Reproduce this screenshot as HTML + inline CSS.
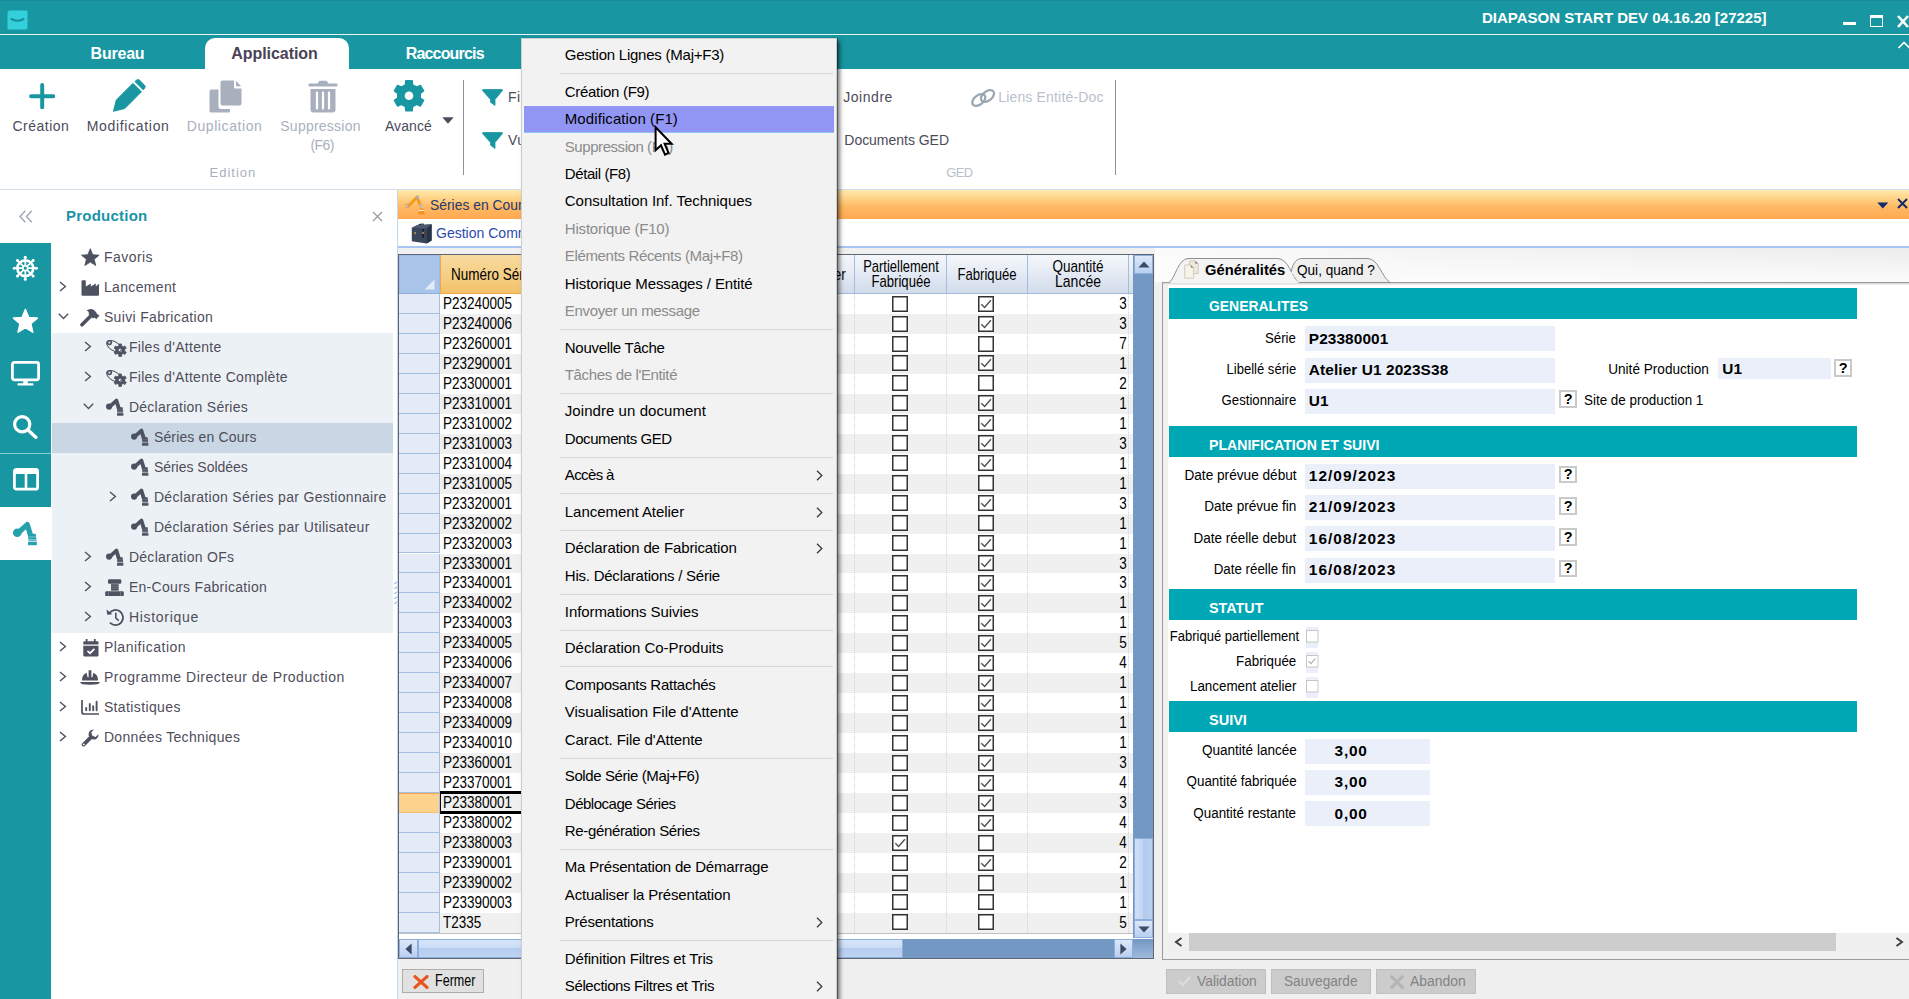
<!DOCTYPE html>
<html lang="fr"><head><meta charset="utf-8"><title>DIAPASON START DEV 04.16.20 [27225]</title>
<style>
html,body{margin:0;padding:0}
body{width:1909px;height:999px;overflow:hidden;position:relative;background:#f0f0f0;font-family:"Liberation Sans",sans-serif;}
.b{position:absolute;box-sizing:border-box;display:block}
.t{position:absolute;white-space:nowrap;display:block}
header,nav,main,aside,menu{display:block;margin:0;padding:0;position:static}
</style></head>
<body>
<header aria-label="Barre de titre et ruban">
<div class="b" style="left:0px;top:0px;width:1909px;height:34px;background:#1897a2;"></div>
<div class="b" style="left:0px;top:0px;width:1909px;height:1px;background:#178c96;"></div>
<div class="b" style="left:0px;top:34px;width:1909px;height:1px;background:#e8f4f5;"></div>
<div class="b" style="left:0px;top:35px;width:1909px;height:34px;background:#1897a2;"></div>
<svg class="b" style="left:7px;top:10px;" width="21" height="20" viewBox="0 0 21 20"><path d="M3 0.5H19.5Q20.5 0.5 20.5 1.5V17Q20.5 19.5 18 19.5H0.5V3Q0.5 0.5 3 0.5Z" fill="#33d0dc"/><path d="M4.5 9Q10.5 12.5 16.5 9" fill="none" stroke="#1a8f9a" stroke-width="2.2" stroke-linecap="round"/></svg>
<span class="t" style="left:1482.00px;top:10.20px;font-size:15px;line-height:15px;color:#fff;font-weight:700;">DIAPASON START DEV 04.16.20 [27225]</span>
<div class="b" style="left:1843px;top:22px;width:13px;height:3px;background:#fff;"></div>
<div class="b" style="left:1870px;top:15px;width:13px;height:12px;border:1.5px solid #fff;border-top-width:3px;box-sizing:border-box;"></div>
<svg class="b" style="left:1896px;top:14px;" width="13" height="15" viewBox="0 0 13 15"><path d="M2 2L12 13M12 2L2 13" stroke="#fff" stroke-width="2.6"/></svg>
<svg class="b" style="left:1897px;top:40px;" width="12" height="10" viewBox="0 0 12 10"><path d="M1.5 8L7 2.5L12.5 8" stroke="#fff" stroke-width="1.6" fill="none"/></svg>
<span class="t" style="left:90.60px;top:45.76px;font-size:16px;line-height:16px;color:#fff;font-weight:700;letter-spacing:-0.225px;">Bureau</span>
<div class="b" style="left:204.7px;top:38px;width:144.2px;height:31px;background:#fff;border-radius:10px 10px 0 0;"></div>
<span class="t" style="left:231.30px;top:45.76px;font-size:16px;line-height:16px;color:#4a4358;font-weight:700;letter-spacing:-0.061px;">Application</span>
<span class="t" style="left:405.70px;top:45.76px;font-size:16px;line-height:16px;color:#fff;font-weight:700;letter-spacing:-0.818px;">Raccourcis</span>
<div class="b" style="left:0px;top:69px;width:1909px;height:120px;background:#fff;"></div>
<div class="b" style="left:0px;top:189px;width:1909px;height:1px;background:#d3e0ea;"></div>
<div class="b" style="left:0px;top:190px;width:398px;height:809px;background:#fff;"></div>
<svg class="b" style="left:28.8px;top:82.9px;" width="26.4" height="26.4" viewBox="0 0 28 28"><path d="M14 2.2V25.8M2.2 14H25.8" stroke="#1897a2" stroke-width="4.2" stroke-linecap="round"/></svg>
<svg class="b" style="left:112px;top:79px;" width="34" height="34" viewBox="0 0 36 36"><path d="M1.5 34.2L4.6 22.2L22.2 4.6L31.2 13.6L13.6 31.2Z" fill="#1897a2" stroke="#1897a2" stroke-width="1" stroke-linejoin="round"/><path d="M24.3 2.7L26 1.2Q27.6 0 29.2 1.3L34.5 6.6Q35.8 8.2 34.5 9.8L33 11.5Z" fill="#1897a2" stroke="#1897a2" stroke-width="1" stroke-linejoin="round"/></svg>
<svg class="b" style="left:209px;top:80px;" width="33" height="33" viewBox="0 0 33 33"><path d="M2.5 9.5H9.5V26.5Q9.5 29 12 29H21V31Q21 32.5 19.5 32.5H2Q0.5 32.5 0.5 31V11.5Q0.5 9.5 2.5 9.5Z" fill="#a9b0bd"/><path d="M13.5 0.5H25V7Q25 8.5 26.5 8.5H32.5V23.5Q32.5 25.5 30.5 25.5H13.5Q11.5 25.5 11.5 23.5V2.5Q11.5 0.5 13.5 0.5Z" fill="#a9b0bd"/><path d="M27 0.8L32.2 6.2H27Z" fill="#a9b0bd"/></svg>
<svg class="b" style="left:308px;top:80px;" width="30" height="33" viewBox="0 0 30 33"><path d="M1.5 3.5H9.5L11.5 0.8H18.5L20.5 3.5H28.5Q29.5 3.5 29.5 4.7V5.8Q29.5 6.5 28.5 6.5H1.5Q0.5 6.5 0.5 5.8V4.7Q0.5 3.5 1.5 3.5Z" fill="#a9b0bd"/><path d="M2.5 9H27.5V29.5Q27.5 32.5 24.5 32.5H5.5Q2.5 32.5 2.5 29.5Z" fill="#a9b0bd"/><path d="M9 12.5V28.5M15 12.5V28.5M21 12.5V28.5" stroke="#fff" stroke-width="2.2" stroke-linecap="round"/></svg>
<svg class="b" style="left:393px;top:79px;" width="32" height="34" viewBox="0 0 34 36"><path d="M13.23 6.10 L13.61 1.76 L20.39 1.76 L20.77 6.10 L25.16 8.63 L29.11 6.79 L32.50 12.66 L28.93 15.16 L28.93 20.24 L32.50 22.74 L29.11 28.61 L25.16 26.77 L20.77 29.30 L20.39 33.64 L13.61 33.64 L13.23 29.30 L8.84 26.77 L4.89 28.61 L1.50 22.74 L5.07 20.24 L5.07 15.16 L1.50 12.66 L4.89 6.79 L8.84 8.63Z M11.60 17.70 a5.4 5.4 0 1 0 10.8 0 a5.4 5.4 0 1 0 -10.8 0Z" fill="#1897a2" fill-rule="evenodd" stroke="#1897a2" stroke-width="1.6" stroke-linejoin="round"/></svg>
<span class="t" style="left:12.50px;top:119.45px;font-size:14px;line-height:14px;color:#4b4b5a;letter-spacing:0.483px;">Création</span>
<span class="t" style="left:86.70px;top:119.45px;font-size:14px;line-height:14px;color:#4b4b5a;letter-spacing:0.682px;">Modification</span>
<span class="t" style="left:186.70px;top:119.45px;font-size:14px;line-height:14px;color:#a9b0bd;letter-spacing:0.594px;">Duplication</span>
<span class="t" style="left:280.30px;top:119.45px;font-size:14px;line-height:14px;color:#a9b0bd;letter-spacing:0.237px;">Suppression</span>
<span class="t" style="left:310.40px;top:137.95px;font-size:14px;line-height:14px;color:#a9b0bd;letter-spacing:-0.587px;">(F6)</span>
<span class="t" style="left:384.90px;top:119.45px;font-size:14px;line-height:14px;color:#4b4b5a;letter-spacing:0.111px;">Avancé</span>
<svg class="b" style="left:442px;top:117px;" width="12" height="7" viewBox="0 0 12 7"><path d="M0.3 0.3H11.7L6 6.7Z" fill="#4b4b5a"/></svg>
<span class="t" style="left:209.60px;top:166.20px;font-size:13px;line-height:13px;color:#a9b0bd;letter-spacing:0.992px;">Edition</span>
<div class="b" style="left:463px;top:80px;width:1px;height:95px;background:#8f919c;"></div>
<svg class="b" style="left:482px;top:88.5px;" width="21" height="18" viewBox="0 0 21 18"><path d="M1.2 0.5H19.8Q21 0.5 20.3 1.7L13 10.5V16.5L8.5 13.2V10.5L0.7 1.7Q0 0.5 1.2 0.5Z" fill="#1897a2" stroke="#1897a2" stroke-width="0.8" stroke-linejoin="round"/></svg>
<svg class="b" style="left:482px;top:131.5px;" width="21" height="18" viewBox="0 0 21 18"><path d="M1.2 0.5H19.8Q21 0.5 20.3 1.7L13 10.5V16.5L8.5 13.2V10.5L0.7 1.7Q0 0.5 1.2 0.5Z" fill="#1897a2" stroke="#1897a2" stroke-width="0.8" stroke-linejoin="round"/></svg>
<span class="t" style="left:508.00px;top:90.45px;font-size:14px;line-height:14px;color:#4b4b5a;letter-spacing:0.4px;">Filtres</span>
<span class="t" style="left:508.00px;top:133.15px;font-size:14px;line-height:14px;color:#4b4b5a;letter-spacing:0.4px;">Vues</span>
<span class="t" style="left:843.20px;top:90.45px;font-size:14px;line-height:14px;color:#4b4b5a;letter-spacing:0.547px;">Joindre</span>
<span class="t" style="left:844.30px;top:133.15px;font-size:14px;line-height:14px;color:#4b4b5a;letter-spacing:-0.028px;">Documents GED</span>
<span class="t" style="left:998.20px;top:90.45px;font-size:14px;line-height:14px;color:#b9c0cb;letter-spacing:0.172px;">Liens Entité-Doc</span>
<svg class="b" style="left:969.5px;top:87.5px;" width="27" height="20" viewBox="0 0 27 20"><g fill="none" stroke="#9aa6b2" stroke-width="2.3"><ellipse cx="8.8" cy="12" rx="7.5" ry="4.6" transform="rotate(-38 8.8 12)"/><ellipse cx="17.5" cy="8" rx="7.5" ry="4.6" transform="rotate(-38 17.5 8)"/></g></svg>
<span class="t" style="left:946.30px;top:166.20px;font-size:13px;line-height:13px;color:#b9c0cb;letter-spacing:-0.685px;">GED</span>
<div class="b" style="left:1114.5px;top:80px;width:1px;height:95px;background:#8f919c;"></div>
</header>
<nav aria-label="Navigation Production">
<svg class="b" style="left:19px;top:210px;" width="14" height="13" viewBox="0 0 14 13"><path d="M6.3 0.8L1 6.5L6.3 12.2M12.8 0.8L7.5 6.5L12.8 12.2" fill="none" stroke="#9ea7b6" stroke-width="1.4"/></svg>
<span class="t" style="left:66.00px;top:208.30px;font-size:15px;line-height:15px;color:#1a94a8;font-weight:700;letter-spacing:0.23px;">Production</span>
<svg class="b" style="left:372px;top:211px;" width="11" height="11" viewBox="0 0 11 11"><path d="M1 1L10 10M10 1L1 10" stroke="#9a9aa4" stroke-width="1.3"/></svg>
<div class="b" style="left:0px;top:242.5px;width:50.5px;height:756.5px;background:#1897a2;"></div>
<div class="b" style="left:0px;top:453px;width:50.5px;height:1px;background:#8fcdd3;"></div>
<div class="b" style="left:0px;top:507px;width:50.5px;height:53px;background:#fff;"></div>
<svg class="b" style="left:0px;top:242px;" width="51" height="60" viewBox="0 242 51 60"><circle cx="25.3" cy="268.2" r="7.9" fill="none" stroke="#fff" stroke-width="2.7"/><circle cx="25.3" cy="268.2" r="2.4" fill="none" stroke="#fff" stroke-width="1.6"/><path d="M28.30 268.20L36.70 268.20" stroke="#fff" stroke-width="1.7" stroke-linecap="round"/><circle cx="36.30" cy="268.20" r="1.5" fill="#fff"/><path d="M27.42 270.32L33.36 276.26" stroke="#fff" stroke-width="1.7" stroke-linecap="round"/><circle cx="33.08" cy="275.98" r="1.5" fill="#fff"/><path d="M25.30 271.20L25.30 279.60" stroke="#fff" stroke-width="1.7" stroke-linecap="round"/><circle cx="25.30" cy="279.20" r="1.5" fill="#fff"/><path d="M23.18 270.32L17.24 276.26" stroke="#fff" stroke-width="1.7" stroke-linecap="round"/><circle cx="17.52" cy="275.98" r="1.5" fill="#fff"/><path d="M22.30 268.20L13.90 268.20" stroke="#fff" stroke-width="1.7" stroke-linecap="round"/><circle cx="14.30" cy="268.20" r="1.5" fill="#fff"/><path d="M23.18 266.08L17.24 260.14" stroke="#fff" stroke-width="1.7" stroke-linecap="round"/><circle cx="17.52" cy="260.42" r="1.5" fill="#fff"/><path d="M25.30 265.20L25.30 256.80" stroke="#fff" stroke-width="1.7" stroke-linecap="round"/><circle cx="25.30" cy="257.20" r="1.5" fill="#fff"/><path d="M27.42 266.08L33.36 260.14" stroke="#fff" stroke-width="1.7" stroke-linecap="round"/><circle cx="33.08" cy="260.42" r="1.5" fill="#fff"/></svg>
<svg class="b" style="left:0px;top:300px;" width="51" height="45" viewBox="0 300 51 45"><path d="M25.40 309.50 L28.69 317.47 L37.29 318.14 L30.73 323.73 L32.75 332.11 L25.40 327.60 L18.05 332.11 L20.07 323.73 L13.51 318.14 L22.11 317.47Z" fill="#fff" stroke="#fff" stroke-width="1.6" stroke-linejoin="round"/></svg>
<svg class="b" style="left:11px;top:361px;" width="29" height="25" viewBox="0 0 29 25"><rect x="1.4" y="1.4" width="26.2" height="17.4" rx="2" fill="none" stroke="#fff" stroke-width="2.8"/><path d="M14.5 19V23" stroke="#fff" stroke-width="4.5"/><path d="M7.5 23.4H21.5" stroke="#fff" stroke-width="2.2" stroke-linecap="round"/></svg>
<svg class="b" style="left:12px;top:414px;" width="26" height="25" viewBox="0 0 26 25"><circle cx="10.2" cy="10.2" r="7.6" fill="none" stroke="#fff" stroke-width="3.2"/><path d="M16 16L23.8 23.3" stroke="#fff" stroke-width="3.4" stroke-linecap="round"/></svg>
<svg class="b" style="left:12.5px;top:468px;" width="26" height="23" viewBox="0 0 26 23"><rect x="1.4" y="1.4" width="23.2" height="19.8" rx="2" fill="none" stroke="#fff" stroke-width="2.8"/><path d="M1.4 4H24.6" stroke="#fff" stroke-width="4"/><path d="M13 4V21" stroke="#fff" stroke-width="2.6"/></svg>
<svg class="b" style="left:12.5px;top:521px;" width="24.660000000000004" height="24.660000000000004" viewBox="0 0 18 18"><circle cx="3.1" cy="8.6" r="3.1" fill="#26a0ab"/><path d="M3.8 8.6L10.4 2.6L12.8 10.4" fill="none" stroke="#26a0ab" stroke-width="3.8" stroke-linejoin="round" stroke-linecap="round"/><path d="M10.8 9.3H16.6L17.2 14.4H11.4Z" fill="#26a0ab"/><path d="M11 15.1H17.4V17.7H11Z" fill="#26a0ab"/><path d="M11.2 11.7H16.9M11.4 13.5H17.1" stroke="#8ed0d6" stroke-width="0.6"/></svg>
<div class="b" style="left:52px;top:332.5px;width:341px;height:300px;background:#ecf1f5;"></div>
<div class="b" style="left:52px;top:422.5px;width:341px;height:30px;background:#c8d7e3;"></div>
<svg class="b" style="left:80.5px;top:248px;" width="19" height="19" viewBox="0 0 19 19"><path d="M9.30 0.70 L11.71 6.68 L18.14 7.13 L13.20 11.27 L14.77 17.52 L9.30 14.10 L3.83 17.52 L5.40 11.27 L0.46 7.13 L6.89 6.68Z" fill="#4d5160" stroke="#4d5160" stroke-width="0.8" stroke-linejoin="round"/></svg>
<span class="t" style="left:103.90px;top:250.35px;font-size:14px;line-height:14px;color:#4f4d5b;letter-spacing:0.467px;">Favoris</span>
<svg class="b" style="left:58.9px;top:280.7px;" width="8" height="11" viewBox="0 0 8 11"><path d="M1 1L6.4 5.5L1 10" fill="none" stroke="#4d5160" stroke-width="1.4"/></svg>
<svg class="b" style="left:80.5px;top:278px;" width="19" height="19" viewBox="0 0 19 19"><path d="M1.5 2.2H4Q4.8 2.2 4.8 3V8.6L9.8 5.5V8.6L14.8 5.5V8.6L18 5.8V16.6Q18 17.8 16.8 17.8H1.6Q0.5 17.8 0.5 16.6V3Q0.5 2.2 1.5 2.2Z" fill="#4d5160"/></svg>
<span class="t" style="left:103.90px;top:280.35px;font-size:14px;line-height:14px;color:#4f4d5b;letter-spacing:0.354px;">Lancement</span>
<svg class="b" style="left:57.8px;top:312.8px;" width="11" height="7" viewBox="0 0 11 7"><path d="M0.8 0.8L5.5 5.4L10.2 0.8" fill="none" stroke="#4d5160" stroke-width="1.4"/></svg>
<svg class="b" style="left:79.5px;top:308px;" width="20" height="19" viewBox="0 0 20 19"><path d="M2 16.8L10.2 8.6" stroke="#4d5160" stroke-width="3.6" stroke-linecap="round"/><path d="M6.5 2.6Q10.5 -0.3 14.2 2.2Q16.6 4 17.2 6.2L19.6 7.2L16.2 11.2L14.6 9.6L13 10.6L8.6 6.2Q9.8 3.6 6.5 2.6Z" fill="#4d5160"/></svg>
<span class="t" style="left:103.90px;top:310.35px;font-size:14px;line-height:14px;color:#4f4d5b;letter-spacing:0.344px;">Suivi Fabrication</span>
<svg class="b" style="left:83.9px;top:340.7px;" width="8" height="11" viewBox="0 0 8 11"><path d="M1 1L6.4 5.5L1 10" fill="none" stroke="#4d5160" stroke-width="1.4"/></svg>
<svg class="b" style="left:106.0px;top:338.5px;" width="21" height="18" viewBox="0 0 21 18"><ellipse cx="8" cy="7.2" rx="8.2" ry="4.4" transform="rotate(32 8 7.2)" fill="none" stroke="#4d5160" stroke-width="0.9"/><circle cx="3.4" cy="3.6" r="2.7" fill="#4d5160"/><rect x="2.5" y="2.7" width="1.8" height="1.8" fill="#ecf1f5"/><path d="M12.78 6.83 L12.87 4.94 L15.53 4.94 L15.62 6.83 L17.28 7.78 L18.96 6.92 L20.29 9.22 L18.70 10.24 L18.70 12.16 L20.29 13.18 L18.96 15.48 L17.28 14.62 L15.62 15.57 L15.53 17.46 L12.87 17.46 L12.78 15.57 L11.12 14.62 L9.44 15.48 L8.11 13.18 L9.70 12.16 L9.70 10.24 L8.11 9.22 L9.44 6.92 L11.12 7.78Z M12.30 11.20 a1.9 1.9 0 1 0 3.8 0 a1.9 1.9 0 1 0 -3.8 0Z" fill="#4d5160" fill-rule="evenodd" stroke="#4d5160" stroke-width="0.7" stroke-linejoin="round"/></svg>
<span class="t" style="left:128.90px;top:340.35px;font-size:14px;line-height:14px;color:#4f4d5b;letter-spacing:0.295px;">Files d'Attente</span>
<svg class="b" style="left:83.9px;top:370.7px;" width="8" height="11" viewBox="0 0 8 11"><path d="M1 1L6.4 5.5L1 10" fill="none" stroke="#4d5160" stroke-width="1.4"/></svg>
<svg class="b" style="left:106.0px;top:368.5px;" width="21" height="18" viewBox="0 0 21 18"><ellipse cx="8" cy="7.2" rx="8.2" ry="4.4" transform="rotate(32 8 7.2)" fill="none" stroke="#4d5160" stroke-width="0.9"/><circle cx="3.4" cy="3.6" r="2.7" fill="#4d5160"/><rect x="2.5" y="2.7" width="1.8" height="1.8" fill="#ecf1f5"/><path d="M12.78 6.83 L12.87 4.94 L15.53 4.94 L15.62 6.83 L17.28 7.78 L18.96 6.92 L20.29 9.22 L18.70 10.24 L18.70 12.16 L20.29 13.18 L18.96 15.48 L17.28 14.62 L15.62 15.57 L15.53 17.46 L12.87 17.46 L12.78 15.57 L11.12 14.62 L9.44 15.48 L8.11 13.18 L9.70 12.16 L9.70 10.24 L8.11 9.22 L9.44 6.92 L11.12 7.78Z M12.30 11.20 a1.9 1.9 0 1 0 3.8 0 a1.9 1.9 0 1 0 -3.8 0Z" fill="#4d5160" fill-rule="evenodd" stroke="#4d5160" stroke-width="0.7" stroke-linejoin="round"/></svg>
<span class="t" style="left:128.90px;top:370.35px;font-size:14px;line-height:14px;color:#4f4d5b;letter-spacing:0.288px;">Files d'Attente Complète</span>
<svg class="b" style="left:82.8px;top:402.8px;" width="11" height="7" viewBox="0 0 11 7"><path d="M0.8 0.8L5.5 5.4L10.2 0.8" fill="none" stroke="#4d5160" stroke-width="1.4"/></svg>
<svg class="b" style="left:106.1px;top:398.3px;" width="18.0" height="18.0" viewBox="0 0 18 18"><circle cx="3.1" cy="8.6" r="3.1" fill="#4d5160"/><path d="M3.8 8.6L10.4 2.6L12.8 10.4" fill="none" stroke="#4d5160" stroke-width="3.8" stroke-linejoin="round" stroke-linecap="round"/><path d="M10.8 9.3H16.6L17.2 14.4H11.4Z" fill="#4d5160"/><path d="M11 15.1H17.4V17.7H11Z" fill="#4d5160"/><path d="M11.2 11.7H16.9M11.4 13.5H17.1" stroke="#787c88" stroke-width="0.6"/></svg>
<span class="t" style="left:128.90px;top:400.35px;font-size:14px;line-height:14px;color:#4f4d5b;letter-spacing:0.266px;">Déclaration Séries</span>
<svg class="b" style="left:131.1px;top:428.3px;" width="18.0" height="18.0" viewBox="0 0 18 18"><circle cx="3.1" cy="8.6" r="3.1" fill="#4d5160"/><path d="M3.8 8.6L10.4 2.6L12.8 10.4" fill="none" stroke="#4d5160" stroke-width="3.8" stroke-linejoin="round" stroke-linecap="round"/><path d="M10.8 9.3H16.6L17.2 14.4H11.4Z" fill="#4d5160"/><path d="M11 15.1H17.4V17.7H11Z" fill="#4d5160"/><path d="M11.2 11.7H16.9M11.4 13.5H17.1" stroke="#787c88" stroke-width="0.6"/></svg>
<span class="t" style="left:153.90px;top:430.35px;font-size:14px;line-height:14px;color:#4f4d5b;letter-spacing:0.159px;">Séries en Cours</span>
<svg class="b" style="left:131.1px;top:458.3px;" width="18.0" height="18.0" viewBox="0 0 18 18"><circle cx="3.1" cy="8.6" r="3.1" fill="#4d5160"/><path d="M3.8 8.6L10.4 2.6L12.8 10.4" fill="none" stroke="#4d5160" stroke-width="3.8" stroke-linejoin="round" stroke-linecap="round"/><path d="M10.8 9.3H16.6L17.2 14.4H11.4Z" fill="#4d5160"/><path d="M11 15.1H17.4V17.7H11Z" fill="#4d5160"/><path d="M11.2 11.7H16.9M11.4 13.5H17.1" stroke="#787c88" stroke-width="0.6"/></svg>
<span class="t" style="left:153.90px;top:460.35px;font-size:14px;line-height:14px;color:#4f4d5b;letter-spacing:-0.02px;">Séries Soldées</span>
<svg class="b" style="left:108.9px;top:490.7px;" width="8" height="11" viewBox="0 0 8 11"><path d="M1 1L6.4 5.5L1 10" fill="none" stroke="#4d5160" stroke-width="1.4"/></svg>
<svg class="b" style="left:131.1px;top:488.3px;" width="18.0" height="18.0" viewBox="0 0 18 18"><circle cx="3.1" cy="8.6" r="3.1" fill="#4d5160"/><path d="M3.8 8.6L10.4 2.6L12.8 10.4" fill="none" stroke="#4d5160" stroke-width="3.8" stroke-linejoin="round" stroke-linecap="round"/><path d="M10.8 9.3H16.6L17.2 14.4H11.4Z" fill="#4d5160"/><path d="M11 15.1H17.4V17.7H11Z" fill="#4d5160"/><path d="M11.2 11.7H16.9M11.4 13.5H17.1" stroke="#787c88" stroke-width="0.6"/></svg>
<span class="t" style="left:153.90px;top:490.35px;font-size:14px;line-height:14px;color:#4f4d5b;letter-spacing:0.312px;">Déclaration Séries par Gestionnaire</span>
<svg class="b" style="left:131.1px;top:518.3px;" width="18.0" height="18.0" viewBox="0 0 18 18"><circle cx="3.1" cy="8.6" r="3.1" fill="#4d5160"/><path d="M3.8 8.6L10.4 2.6L12.8 10.4" fill="none" stroke="#4d5160" stroke-width="3.8" stroke-linejoin="round" stroke-linecap="round"/><path d="M10.8 9.3H16.6L17.2 14.4H11.4Z" fill="#4d5160"/><path d="M11 15.1H17.4V17.7H11Z" fill="#4d5160"/><path d="M11.2 11.7H16.9M11.4 13.5H17.1" stroke="#787c88" stroke-width="0.6"/></svg>
<span class="t" style="left:153.90px;top:520.35px;font-size:14px;line-height:14px;color:#4f4d5b;letter-spacing:0.326px;">Déclaration Séries par Utilisateur</span>
<svg class="b" style="left:83.9px;top:550.7px;" width="8" height="11" viewBox="0 0 8 11"><path d="M1 1L6.4 5.5L1 10" fill="none" stroke="#4d5160" stroke-width="1.4"/></svg>
<svg class="b" style="left:106.1px;top:548.3px;" width="18.0" height="18.0" viewBox="0 0 18 18"><circle cx="3.1" cy="8.6" r="3.1" fill="#4d5160"/><path d="M3.8 8.6L10.4 2.6L12.8 10.4" fill="none" stroke="#4d5160" stroke-width="3.8" stroke-linejoin="round" stroke-linecap="round"/><path d="M10.8 9.3H16.6L17.2 14.4H11.4Z" fill="#4d5160"/><path d="M11 15.1H17.4V17.7H11Z" fill="#4d5160"/><path d="M11.2 11.7H16.9M11.4 13.5H17.1" stroke="#787c88" stroke-width="0.6"/></svg>
<span class="t" style="left:128.90px;top:550.35px;font-size:14px;line-height:14px;color:#4f4d5b;letter-spacing:0.283px;">Déclaration OFs</span>
<svg class="b" style="left:83.9px;top:580.7px;" width="8" height="11" viewBox="0 0 8 11"><path d="M1 1L6.4 5.5L1 10" fill="none" stroke="#4d5160" stroke-width="1.4"/></svg>
<svg class="b" style="left:105.3px;top:579px;" width="19" height="18" viewBox="0 0 19 18"><rect x="3" y="0.2" width="13.3" height="4.6" rx="1.2" fill="#4d5160"/><rect x="6" y="4.8" width="7.6" height="7" fill="#70737f"/><path d="M6 6.2H13.6M6 8.3H13.6M6 10.4H13.6" stroke="#4d5160" stroke-width="1.1"/><rect x="0.2" y="12.3" width="18.6" height="4.8" rx="1.2" fill="#4d5160"/><path d="M3.6 12.3V17.1M15.4 12.3V17.1" stroke="#7a7d88" stroke-width="0.9"/></svg>
<span class="t" style="left:128.90px;top:580.35px;font-size:14px;line-height:14px;color:#4f4d5b;letter-spacing:0.296px;">En-Cours Fabrication</span>
<svg class="b" style="left:83.9px;top:610.7px;" width="8" height="11" viewBox="0 0 8 11"><path d="M1 1L6.4 5.5L1 10" fill="none" stroke="#4d5160" stroke-width="1.4"/></svg>
<svg class="b" style="left:106.0px;top:608px;" width="19" height="19" viewBox="0 0 19 19"><path d="M3.2 5.2A7.6 7.6 0 1 1 4.4 15.2" fill="none" stroke="#4d5160" stroke-width="1.8" stroke-linecap="round"/><path d="M0.6 1.6L1.2 6.8L6.4 6.2Z" fill="#4d5160"/><path d="M9.8 5.2V10L12.2 12.2" fill="none" stroke="#4d5160" stroke-width="1.6" stroke-linecap="round"/></svg>
<span class="t" style="left:128.90px;top:610.35px;font-size:14px;line-height:14px;color:#4f4d5b;letter-spacing:0.708px;">Historique</span>
<svg class="b" style="left:58.9px;top:640.7px;" width="8" height="11" viewBox="0 0 8 11"><path d="M1 1L6.4 5.5L1 10" fill="none" stroke="#4d5160" stroke-width="1.4"/></svg>
<svg class="b" style="left:82.5px;top:638.5px;" width="16" height="18" viewBox="0 0 16 18"><path d="M3.6 0V3M11.8 0V3" stroke="#4d5160" stroke-width="1.8"/><path d="M1.5 2.2H14.3Q15.5 2.2 15.5 3.4V5.6H0.3V3.4Q0.3 2.2 1.5 2.2Z" fill="#4d5160"/><path d="M0.3 6.8H15.5V16.2Q15.5 17.6 14.1 17.6H1.7Q0.3 17.6 0.3 16.2Z" fill="#4d5160"/><path d="M4.4 11.8L7 14.2L11.4 9.8" fill="none" stroke="#fff" stroke-width="1.7"/></svg>
<span class="t" style="left:103.90px;top:640.35px;font-size:14px;line-height:14px;color:#4f4d5b;letter-spacing:0.518px;">Planification</span>
<svg class="b" style="left:58.9px;top:670.7px;" width="8" height="11" viewBox="0 0 8 11"><path d="M1 1L6.4 5.5L1 10" fill="none" stroke="#4d5160" stroke-width="1.4"/></svg>
<svg class="b" style="left:79.7px;top:670px;" width="20" height="16" viewBox="0 0 20 16"><path d="M2 10.4Q2 4.6 6.6 2.8L7.6 7.2H8.6V0.3H11.4V7.2H12.4L13.4 2.8Q18 4.6 18 10.4Z" fill="#4d5160"/><path d="M0.4 12H19.6V12.6Q19.6 14.8 10 14.8Q0.4 14.8 0.4 12.6Z" fill="#4d5160"/></svg>
<span class="t" style="left:103.90px;top:670.35px;font-size:14px;line-height:14px;color:#4f4d5b;letter-spacing:0.51px;">Programme Directeur de Production</span>
<svg class="b" style="left:58.9px;top:700.7px;" width="8" height="11" viewBox="0 0 8 11"><path d="M1 1L6.4 5.5L1 10" fill="none" stroke="#4d5160" stroke-width="1.4"/></svg>
<svg class="b" style="left:81.3px;top:699.8px;" width="18" height="16" viewBox="0 0 18 16"><path d="M1 0.6V12Q1 14 3 14H17.6" fill="none" stroke="#4d5160" stroke-width="1.7" stroke-linecap="round"/><path d="M5.2 8V10.2M8.8 4V10.2M12.2 6.2V10.2M15.6 1.8V10.2" stroke="#4d5160" stroke-width="1.9" stroke-linecap="round"/></svg>
<span class="t" style="left:103.90px;top:700.35px;font-size:14px;line-height:14px;color:#4f4d5b;letter-spacing:0.375px;">Statistiques</span>
<svg class="b" style="left:58.9px;top:730.7px;" width="8" height="11" viewBox="0 0 8 11"><path d="M1 1L6.4 5.5L1 10" fill="none" stroke="#4d5160" stroke-width="1.4"/></svg>
<svg class="b" style="left:81.3px;top:728.6px;" width="18" height="18" viewBox="0 0 18 18"><path d="M2.6 15.6L9.6 8.6" stroke="#4d5160" stroke-width="3.8" stroke-linecap="round"/><path d="M12.8 0.4Q9.4 0.2 8 3Q6.8 5.6 8.6 8.2L10.2 9.8Q12.6 11.2 15.2 10Q17.8 8.4 17.6 5L14.6 8L11.4 6.8L10.2 3.6Z" fill="#4d5160"/><circle cx="2.8" cy="15.4" r="0.9" fill="#fff"/></svg>
<span class="t" style="left:103.90px;top:730.35px;font-size:14px;line-height:14px;color:#4f4d5b;letter-spacing:0.326px;">Données Techniques</span>
<svg class="b" style="left:394px;top:581px;" width="4" height="26" viewBox="0 0 4 26"><path d="M0.5 3L3 0.5M0.5 8L3 5.5M0.5 13L3 10.5M0.5 18L3 15.5M0.5 23L3 20.5" stroke="#5b8fd6" stroke-width="1"/></svg>
</nav>
<main aria-label="Séries en Cours">
<div class="b" style="left:397px;top:190px;width:1px;height:809px;background:#c3d6ee;"></div>
<div class="b" style="left:398px;top:190px;width:1511px;height:28.5px;background:linear-gradient(#ffe9ac 0%,#ffd488 28%,#ffb964 58%,#ffa850 100%);"></div>
<svg class="b" style="left:405px;top:195px;" width="21" height="20" viewBox="0 0 21 20"><path d="M0.8 9.6L3.6 8.8L4.4 12L1.6 12.8Z" fill="#c9cdd6" stroke="#9498a4" stroke-width="0.6"/><path d="M4 10.6L12 2.2L15.6 10.8" fill="none" stroke="#f59a1c" stroke-width="3" stroke-linejoin="round" stroke-linecap="round"/><rect x="11.2" y="0.4" width="2.4" height="4" rx="0.8" fill="#a9adb8"/><rect x="14.6" y="9" width="2.6" height="3.6" rx="0.8" fill="#b9bdc8"/><path d="M13.2 19.6L14.4 13.4H18.2L19.8 19.6Z" fill="#f68f1c"/><path d="M13.8 15.4H18.8" stroke="#fff" stroke-width="1"/></svg>
<span class="t" style="left:429.60px;top:196.50px;font-size:15px;line-height:15px;color:#1f3a70;transform:scaleX(0.925);transform-origin:left center;">Séries en Cours</span>
<svg class="b" style="left:1877px;top:201.5px;" width="12" height="7" viewBox="0 0 12 7"><path d="M0.3 0.5H11.3L5.8 6.5Z" fill="#0f2a6e"/></svg>
<svg class="b" style="left:1897px;top:198px;" width="11" height="11" viewBox="0 0 11 11"><path d="M1 1L10 10M10 1L1 10" stroke="#0f2a6e" stroke-width="1.9"/></svg>
<div class="b" style="left:398px;top:218.5px;width:1511px;height:28px;background:#fff;"></div>
<div class="b" style="left:398px;top:246px;width:1511px;height:2px;background:#a9c5f3;"></div>
<svg class="b" style="left:411px;top:223px;" width="22" height="21" viewBox="0 0 22 21"><path d="M7.5 2.2Q10 0.6 13 1.4" fill="none" stroke="#2b3444" stroke-width="1.4"/><path d="M0.8 4.8L6 2.2L20.6 1.2V17.6L15.6 20.6L0.8 18.2Z" fill="#3a465b"/><path d="M0.8 4.8L6 2.2L20.6 1.2L15.8 5.6Z" fill="#4b586e"/><path d="M15.8 5.6L20.6 1.2V17.6L15.6 20.6Z" fill="#2a3446"/><path d="M12 6V14.5" stroke="#10151e" stroke-width="1.6"/><rect x="3.4" y="9" width="1.4" height="2.2" fill="#c9a040"/><rect x="11.3" y="8.8" width="1.4" height="2.2" fill="#c9a040"/></svg>
<span class="t" style="left:436.00px;top:224.90px;font-size:15px;line-height:15px;color:#2a4aac;transform:scaleX(0.935);transform-origin:left center;">Gestion Commandes</span>
<div class="b" style="left:398px;top:254px;width:756px;height:705px;background:#fff;border:1px solid #5f6672;"></div>
<div class="b" style="left:399px;top:255px;width:41px;height:39px;background:#a9c4e9;border:1px solid #9dbbe4;border-bottom-color:#8fb0dc;"></div>
<svg class="b" style="left:424px;top:279px;" width="11" height="11" viewBox="0 0 11 11"><path d="M10.5 0.5V10.5H0.5Z" fill="#e3ebf7"/></svg>
<div class="b" style="left:440px;top:255px;width:260px;height:39px;background:linear-gradient(#f8dba0,#f5cd82 60%,#f3c168);border-left:1px solid #f3a64c;border-bottom:1px solid #f3a64c;"></div>
<span class="t" style="left:451.00px;top:267.11px;font-size:15.7px;line-height:15.7px;color:#000;transform:scaleX(0.8609);transform-origin:left center;">Numéro Série</span>
<div class="b" style="left:700px;top:255px;width:155px;height:39px;background:linear-gradient(#f4f7fb,#e4eaf4 50%,#d2dbea);border-right:1px solid #a6bcdb;border-bottom:1px solid #a6bcdb;"></div>
<span class="t" style="right:1063.50px;top:266.91px;font-size:15.7px;line-height:15.7px;color:#000;transform:scaleX(0.8609);transform-origin:right center;">Lancement atelier</span>
<div class="b" style="left:855px;top:255px;width:92px;height:39px;background:linear-gradient(#f4f7fb,#e4eaf4 50%,#d2dbea);border-right:1px solid #a6bcdb;border-bottom:1px solid #a6bcdb;"></div>
<div class="b" style="left:947px;top:255px;width:81px;height:39px;background:linear-gradient(#f4f7fb,#e4eaf4 50%,#d2dbea);border-right:1px solid #a6bcdb;border-bottom:1px solid #a6bcdb;"></div>
<div class="b" style="left:1028px;top:255px;width:101px;height:39px;background:linear-gradient(#f4f7fb,#e4eaf4 50%,#d2dbea);border-right:1px solid #a6bcdb;border-bottom:1px solid #a6bcdb;"></div>
<div class="b" style="left:1129px;top:255px;width:4px;height:39px;background:linear-gradient(#f4f7fb,#e4eaf4 50%,#d2dbea);border-bottom:1px solid #9db7dd;"></div>
<span class="t" style="left:700.70px;width:400px;text-align:center;top:258.91px;font-size:15.7px;line-height:15.7px;color:#000;transform:scaleX(0.8269);transform-origin:center center;">Partiellement</span>
<span class="t" style="left:700.70px;width:400px;text-align:center;top:274.41px;font-size:15.7px;line-height:15.7px;color:#000;transform:scaleX(0.8352);transform-origin:center center;">Fabriquée</span>
<span class="t" style="left:786.50px;width:400px;text-align:center;top:266.91px;font-size:15.7px;line-height:15.7px;color:#000;transform:scaleX(0.8352);transform-origin:center center;">Fabriquée</span>
<span class="t" style="left:878.30px;width:400px;text-align:center;top:258.91px;font-size:15.7px;line-height:15.7px;color:#000;transform:scaleX(0.86);transform-origin:center center;">Quantité</span>
<span class="t" style="left:878.40px;width:400px;text-align:center;top:274.41px;font-size:15.7px;line-height:15.7px;color:#000;transform:scaleX(0.8938);transform-origin:center center;">Lancée</span>
<div class="b" style="left:399px;top:294.0px;width:41px;height:19.962px;background:#e4ebf7;border-bottom:1px solid #a5bfe0;border-right:1px solid #a5bfe0;"></div>
<span class="t" style="left:443.30px;top:296.01px;font-size:15.7px;line-height:15.7px;color:#000;transform:scaleX(0.8609);transform-origin:left center;">P23240005</span>
<span class="t" style="right:782.70px;top:296.01px;font-size:15.7px;line-height:15.7px;color:#000;transform:scaleX(0.8609);transform-origin:right center;">3</span>
<svg class="b" style="left:891.8px;top:295.6px;" width="16" height="16" viewBox="0 0 16 16"><rect x="0.75" y="0.75" width="14.5" height="14.5" fill="#fff" stroke="#333" stroke-width="1.5"/></svg>
<svg class="b" style="left:978px;top:295.6px;" width="16" height="16" viewBox="0 0 16 16"><rect x="0.75" y="0.75" width="14.5" height="14.5" fill="#fff" stroke="#333" stroke-width="1.5"/><path d="M3.3 8.2L6.6 11.4L12.9 4.2" fill="none" stroke="#505050" stroke-width="1.4"/></svg>
<div class="b" style="left:440px;top:313.96px;width:693px;height:19.962px;background:#f0f0f0;"></div>
<div class="b" style="left:399px;top:313.96px;width:41px;height:19.962px;background:#e4ebf7;border-bottom:1px solid #a5bfe0;border-right:1px solid #a5bfe0;"></div>
<span class="t" style="left:443.30px;top:315.97px;font-size:15.7px;line-height:15.7px;color:#000;transform:scaleX(0.8609);transform-origin:left center;">P23240006</span>
<span class="t" style="right:782.70px;top:315.97px;font-size:15.7px;line-height:15.7px;color:#000;transform:scaleX(0.8609);transform-origin:right center;">3</span>
<svg class="b" style="left:891.8px;top:315.56px;" width="16" height="16" viewBox="0 0 16 16"><rect x="0.75" y="0.75" width="14.5" height="14.5" fill="#fff" stroke="#333" stroke-width="1.5"/></svg>
<svg class="b" style="left:978px;top:315.56px;" width="16" height="16" viewBox="0 0 16 16"><rect x="0.75" y="0.75" width="14.5" height="14.5" fill="#fff" stroke="#333" stroke-width="1.5"/><path d="M3.3 8.2L6.6 11.4L12.9 4.2" fill="none" stroke="#505050" stroke-width="1.4"/></svg>
<div class="b" style="left:399px;top:333.92px;width:41px;height:19.962px;background:#e4ebf7;border-bottom:1px solid #a5bfe0;border-right:1px solid #a5bfe0;"></div>
<span class="t" style="left:443.30px;top:335.93px;font-size:15.7px;line-height:15.7px;color:#000;transform:scaleX(0.8609);transform-origin:left center;">P23260001</span>
<span class="t" style="right:782.70px;top:335.93px;font-size:15.7px;line-height:15.7px;color:#000;transform:scaleX(0.8609);transform-origin:right center;">7</span>
<svg class="b" style="left:891.8px;top:335.52px;" width="16" height="16" viewBox="0 0 16 16"><rect x="0.75" y="0.75" width="14.5" height="14.5" fill="#fff" stroke="#333" stroke-width="1.5"/></svg>
<svg class="b" style="left:978px;top:335.52px;" width="16" height="16" viewBox="0 0 16 16"><rect x="0.75" y="0.75" width="14.5" height="14.5" fill="#fff" stroke="#333" stroke-width="1.5"/></svg>
<div class="b" style="left:440px;top:353.89px;width:693px;height:19.962px;background:#f0f0f0;"></div>
<div class="b" style="left:399px;top:353.89px;width:41px;height:19.962px;background:#e4ebf7;border-bottom:1px solid #a5bfe0;border-right:1px solid #a5bfe0;"></div>
<span class="t" style="left:443.30px;top:355.90px;font-size:15.7px;line-height:15.7px;color:#000;transform:scaleX(0.8609);transform-origin:left center;">P23290001</span>
<span class="t" style="right:782.70px;top:355.90px;font-size:15.7px;line-height:15.7px;color:#000;transform:scaleX(0.8609);transform-origin:right center;">1</span>
<svg class="b" style="left:891.8px;top:355.49px;" width="16" height="16" viewBox="0 0 16 16"><rect x="0.75" y="0.75" width="14.5" height="14.5" fill="#fff" stroke="#333" stroke-width="1.5"/></svg>
<svg class="b" style="left:978px;top:355.49px;" width="16" height="16" viewBox="0 0 16 16"><rect x="0.75" y="0.75" width="14.5" height="14.5" fill="#fff" stroke="#333" stroke-width="1.5"/><path d="M3.3 8.2L6.6 11.4L12.9 4.2" fill="none" stroke="#505050" stroke-width="1.4"/></svg>
<div class="b" style="left:399px;top:373.85px;width:41px;height:19.962px;background:#e4ebf7;border-bottom:1px solid #a5bfe0;border-right:1px solid #a5bfe0;"></div>
<span class="t" style="left:443.30px;top:375.86px;font-size:15.7px;line-height:15.7px;color:#000;transform:scaleX(0.8609);transform-origin:left center;">P23300001</span>
<span class="t" style="right:782.70px;top:375.86px;font-size:15.7px;line-height:15.7px;color:#000;transform:scaleX(0.8609);transform-origin:right center;">2</span>
<svg class="b" style="left:891.8px;top:375.45px;" width="16" height="16" viewBox="0 0 16 16"><rect x="0.75" y="0.75" width="14.5" height="14.5" fill="#fff" stroke="#333" stroke-width="1.5"/></svg>
<svg class="b" style="left:978px;top:375.45px;" width="16" height="16" viewBox="0 0 16 16"><rect x="0.75" y="0.75" width="14.5" height="14.5" fill="#fff" stroke="#333" stroke-width="1.5"/></svg>
<div class="b" style="left:440px;top:393.81px;width:693px;height:19.962px;background:#f0f0f0;"></div>
<div class="b" style="left:399px;top:393.81px;width:41px;height:19.962px;background:#e4ebf7;border-bottom:1px solid #a5bfe0;border-right:1px solid #a5bfe0;"></div>
<span class="t" style="left:443.30px;top:395.82px;font-size:15.7px;line-height:15.7px;color:#000;transform:scaleX(0.8609);transform-origin:left center;">P23310001</span>
<span class="t" style="right:782.70px;top:395.82px;font-size:15.7px;line-height:15.7px;color:#000;transform:scaleX(0.8609);transform-origin:right center;">1</span>
<svg class="b" style="left:891.8px;top:395.41px;" width="16" height="16" viewBox="0 0 16 16"><rect x="0.75" y="0.75" width="14.5" height="14.5" fill="#fff" stroke="#333" stroke-width="1.5"/></svg>
<svg class="b" style="left:978px;top:395.41px;" width="16" height="16" viewBox="0 0 16 16"><rect x="0.75" y="0.75" width="14.5" height="14.5" fill="#fff" stroke="#333" stroke-width="1.5"/><path d="M3.3 8.2L6.6 11.4L12.9 4.2" fill="none" stroke="#505050" stroke-width="1.4"/></svg>
<div class="b" style="left:399px;top:413.77px;width:41px;height:19.962px;background:#e4ebf7;border-bottom:1px solid #a5bfe0;border-right:1px solid #a5bfe0;"></div>
<span class="t" style="left:443.30px;top:415.78px;font-size:15.7px;line-height:15.7px;color:#000;transform:scaleX(0.8609);transform-origin:left center;">P23310002</span>
<span class="t" style="right:782.70px;top:415.78px;font-size:15.7px;line-height:15.7px;color:#000;transform:scaleX(0.8609);transform-origin:right center;">1</span>
<svg class="b" style="left:891.8px;top:415.37px;" width="16" height="16" viewBox="0 0 16 16"><rect x="0.75" y="0.75" width="14.5" height="14.5" fill="#fff" stroke="#333" stroke-width="1.5"/></svg>
<svg class="b" style="left:978px;top:415.37px;" width="16" height="16" viewBox="0 0 16 16"><rect x="0.75" y="0.75" width="14.5" height="14.5" fill="#fff" stroke="#333" stroke-width="1.5"/><path d="M3.3 8.2L6.6 11.4L12.9 4.2" fill="none" stroke="#505050" stroke-width="1.4"/></svg>
<div class="b" style="left:440px;top:433.73px;width:693px;height:19.962px;background:#f0f0f0;"></div>
<div class="b" style="left:399px;top:433.73px;width:41px;height:19.962px;background:#e4ebf7;border-bottom:1px solid #a5bfe0;border-right:1px solid #a5bfe0;"></div>
<span class="t" style="left:443.30px;top:435.74px;font-size:15.7px;line-height:15.7px;color:#000;transform:scaleX(0.8609);transform-origin:left center;">P23310003</span>
<span class="t" style="right:782.70px;top:435.74px;font-size:15.7px;line-height:15.7px;color:#000;transform:scaleX(0.8609);transform-origin:right center;">3</span>
<svg class="b" style="left:891.8px;top:435.33px;" width="16" height="16" viewBox="0 0 16 16"><rect x="0.75" y="0.75" width="14.5" height="14.5" fill="#fff" stroke="#333" stroke-width="1.5"/></svg>
<svg class="b" style="left:978px;top:435.33px;" width="16" height="16" viewBox="0 0 16 16"><rect x="0.75" y="0.75" width="14.5" height="14.5" fill="#fff" stroke="#333" stroke-width="1.5"/><path d="M3.3 8.2L6.6 11.4L12.9 4.2" fill="none" stroke="#505050" stroke-width="1.4"/></svg>
<div class="b" style="left:399px;top:453.7px;width:41px;height:19.962px;background:#e4ebf7;border-bottom:1px solid #a5bfe0;border-right:1px solid #a5bfe0;"></div>
<span class="t" style="left:443.30px;top:455.71px;font-size:15.7px;line-height:15.7px;color:#000;transform:scaleX(0.8609);transform-origin:left center;">P23310004</span>
<span class="t" style="right:782.70px;top:455.71px;font-size:15.7px;line-height:15.7px;color:#000;transform:scaleX(0.8609);transform-origin:right center;">1</span>
<svg class="b" style="left:891.8px;top:455.3px;" width="16" height="16" viewBox="0 0 16 16"><rect x="0.75" y="0.75" width="14.5" height="14.5" fill="#fff" stroke="#333" stroke-width="1.5"/></svg>
<svg class="b" style="left:978px;top:455.3px;" width="16" height="16" viewBox="0 0 16 16"><rect x="0.75" y="0.75" width="14.5" height="14.5" fill="#fff" stroke="#333" stroke-width="1.5"/><path d="M3.3 8.2L6.6 11.4L12.9 4.2" fill="none" stroke="#505050" stroke-width="1.4"/></svg>
<div class="b" style="left:440px;top:473.66px;width:693px;height:19.962px;background:#f0f0f0;"></div>
<div class="b" style="left:399px;top:473.66px;width:41px;height:19.962px;background:#e4ebf7;border-bottom:1px solid #a5bfe0;border-right:1px solid #a5bfe0;"></div>
<span class="t" style="left:443.30px;top:475.67px;font-size:15.7px;line-height:15.7px;color:#000;transform:scaleX(0.8609);transform-origin:left center;">P23310005</span>
<span class="t" style="right:782.70px;top:475.67px;font-size:15.7px;line-height:15.7px;color:#000;transform:scaleX(0.8609);transform-origin:right center;">1</span>
<svg class="b" style="left:891.8px;top:475.26px;" width="16" height="16" viewBox="0 0 16 16"><rect x="0.75" y="0.75" width="14.5" height="14.5" fill="#fff" stroke="#333" stroke-width="1.5"/></svg>
<svg class="b" style="left:978px;top:475.26px;" width="16" height="16" viewBox="0 0 16 16"><rect x="0.75" y="0.75" width="14.5" height="14.5" fill="#fff" stroke="#333" stroke-width="1.5"/></svg>
<div class="b" style="left:399px;top:493.62px;width:41px;height:19.962px;background:#e4ebf7;border-bottom:1px solid #a5bfe0;border-right:1px solid #a5bfe0;"></div>
<span class="t" style="left:443.30px;top:495.63px;font-size:15.7px;line-height:15.7px;color:#000;transform:scaleX(0.8609);transform-origin:left center;">P23320001</span>
<span class="t" style="right:782.70px;top:495.63px;font-size:15.7px;line-height:15.7px;color:#000;transform:scaleX(0.8609);transform-origin:right center;">3</span>
<svg class="b" style="left:891.8px;top:495.22px;" width="16" height="16" viewBox="0 0 16 16"><rect x="0.75" y="0.75" width="14.5" height="14.5" fill="#fff" stroke="#333" stroke-width="1.5"/></svg>
<svg class="b" style="left:978px;top:495.22px;" width="16" height="16" viewBox="0 0 16 16"><rect x="0.75" y="0.75" width="14.5" height="14.5" fill="#fff" stroke="#333" stroke-width="1.5"/><path d="M3.3 8.2L6.6 11.4L12.9 4.2" fill="none" stroke="#505050" stroke-width="1.4"/></svg>
<div class="b" style="left:440px;top:513.58px;width:693px;height:19.962px;background:#f0f0f0;"></div>
<div class="b" style="left:399px;top:513.58px;width:41px;height:19.962px;background:#e4ebf7;border-bottom:1px solid #a5bfe0;border-right:1px solid #a5bfe0;"></div>
<span class="t" style="left:443.30px;top:515.59px;font-size:15.7px;line-height:15.7px;color:#000;transform:scaleX(0.8609);transform-origin:left center;">P23320002</span>
<span class="t" style="right:782.70px;top:515.59px;font-size:15.7px;line-height:15.7px;color:#000;transform:scaleX(0.8609);transform-origin:right center;">1</span>
<svg class="b" style="left:891.8px;top:515.18px;" width="16" height="16" viewBox="0 0 16 16"><rect x="0.75" y="0.75" width="14.5" height="14.5" fill="#fff" stroke="#333" stroke-width="1.5"/></svg>
<svg class="b" style="left:978px;top:515.18px;" width="16" height="16" viewBox="0 0 16 16"><rect x="0.75" y="0.75" width="14.5" height="14.5" fill="#fff" stroke="#333" stroke-width="1.5"/></svg>
<div class="b" style="left:399px;top:533.54px;width:41px;height:19.962px;background:#e4ebf7;border-bottom:1px solid #a5bfe0;border-right:1px solid #a5bfe0;"></div>
<span class="t" style="left:443.30px;top:535.55px;font-size:15.7px;line-height:15.7px;color:#000;transform:scaleX(0.8609);transform-origin:left center;">P23320003</span>
<span class="t" style="right:782.70px;top:535.55px;font-size:15.7px;line-height:15.7px;color:#000;transform:scaleX(0.8609);transform-origin:right center;">1</span>
<svg class="b" style="left:891.8px;top:535.14px;" width="16" height="16" viewBox="0 0 16 16"><rect x="0.75" y="0.75" width="14.5" height="14.5" fill="#fff" stroke="#333" stroke-width="1.5"/></svg>
<svg class="b" style="left:978px;top:535.14px;" width="16" height="16" viewBox="0 0 16 16"><rect x="0.75" y="0.75" width="14.5" height="14.5" fill="#fff" stroke="#333" stroke-width="1.5"/><path d="M3.3 8.2L6.6 11.4L12.9 4.2" fill="none" stroke="#505050" stroke-width="1.4"/></svg>
<div class="b" style="left:440px;top:553.51px;width:693px;height:19.962px;background:#f0f0f0;"></div>
<div class="b" style="left:399px;top:553.51px;width:41px;height:19.962px;background:#e4ebf7;border-bottom:1px solid #a5bfe0;border-right:1px solid #a5bfe0;"></div>
<span class="t" style="left:443.30px;top:555.52px;font-size:15.7px;line-height:15.7px;color:#000;transform:scaleX(0.8609);transform-origin:left center;">P23330001</span>
<span class="t" style="right:782.70px;top:555.52px;font-size:15.7px;line-height:15.7px;color:#000;transform:scaleX(0.8609);transform-origin:right center;">3</span>
<svg class="b" style="left:891.8px;top:555.11px;" width="16" height="16" viewBox="0 0 16 16"><rect x="0.75" y="0.75" width="14.5" height="14.5" fill="#fff" stroke="#333" stroke-width="1.5"/></svg>
<svg class="b" style="left:978px;top:555.11px;" width="16" height="16" viewBox="0 0 16 16"><rect x="0.75" y="0.75" width="14.5" height="14.5" fill="#fff" stroke="#333" stroke-width="1.5"/><path d="M3.3 8.2L6.6 11.4L12.9 4.2" fill="none" stroke="#505050" stroke-width="1.4"/></svg>
<div class="b" style="left:399px;top:573.47px;width:41px;height:19.962px;background:#e4ebf7;border-bottom:1px solid #a5bfe0;border-right:1px solid #a5bfe0;"></div>
<span class="t" style="left:443.30px;top:575.48px;font-size:15.7px;line-height:15.7px;color:#000;transform:scaleX(0.8609);transform-origin:left center;">P23340001</span>
<span class="t" style="right:782.70px;top:575.48px;font-size:15.7px;line-height:15.7px;color:#000;transform:scaleX(0.8609);transform-origin:right center;">3</span>
<svg class="b" style="left:891.8px;top:575.07px;" width="16" height="16" viewBox="0 0 16 16"><rect x="0.75" y="0.75" width="14.5" height="14.5" fill="#fff" stroke="#333" stroke-width="1.5"/></svg>
<svg class="b" style="left:978px;top:575.07px;" width="16" height="16" viewBox="0 0 16 16"><rect x="0.75" y="0.75" width="14.5" height="14.5" fill="#fff" stroke="#333" stroke-width="1.5"/><path d="M3.3 8.2L6.6 11.4L12.9 4.2" fill="none" stroke="#505050" stroke-width="1.4"/></svg>
<div class="b" style="left:440px;top:593.43px;width:693px;height:19.962px;background:#f0f0f0;"></div>
<div class="b" style="left:399px;top:593.43px;width:41px;height:19.962px;background:#e4ebf7;border-bottom:1px solid #a5bfe0;border-right:1px solid #a5bfe0;"></div>
<span class="t" style="left:443.30px;top:595.44px;font-size:15.7px;line-height:15.7px;color:#000;transform:scaleX(0.8609);transform-origin:left center;">P23340002</span>
<span class="t" style="right:782.70px;top:595.44px;font-size:15.7px;line-height:15.7px;color:#000;transform:scaleX(0.8609);transform-origin:right center;">1</span>
<svg class="b" style="left:891.8px;top:595.03px;" width="16" height="16" viewBox="0 0 16 16"><rect x="0.75" y="0.75" width="14.5" height="14.5" fill="#fff" stroke="#333" stroke-width="1.5"/></svg>
<svg class="b" style="left:978px;top:595.03px;" width="16" height="16" viewBox="0 0 16 16"><rect x="0.75" y="0.75" width="14.5" height="14.5" fill="#fff" stroke="#333" stroke-width="1.5"/><path d="M3.3 8.2L6.6 11.4L12.9 4.2" fill="none" stroke="#505050" stroke-width="1.4"/></svg>
<div class="b" style="left:399px;top:613.39px;width:41px;height:19.962px;background:#e4ebf7;border-bottom:1px solid #a5bfe0;border-right:1px solid #a5bfe0;"></div>
<span class="t" style="left:443.30px;top:615.40px;font-size:15.7px;line-height:15.7px;color:#000;transform:scaleX(0.8609);transform-origin:left center;">P23340003</span>
<span class="t" style="right:782.70px;top:615.40px;font-size:15.7px;line-height:15.7px;color:#000;transform:scaleX(0.8609);transform-origin:right center;">1</span>
<svg class="b" style="left:891.8px;top:614.99px;" width="16" height="16" viewBox="0 0 16 16"><rect x="0.75" y="0.75" width="14.5" height="14.5" fill="#fff" stroke="#333" stroke-width="1.5"/></svg>
<svg class="b" style="left:978px;top:614.99px;" width="16" height="16" viewBox="0 0 16 16"><rect x="0.75" y="0.75" width="14.5" height="14.5" fill="#fff" stroke="#333" stroke-width="1.5"/><path d="M3.3 8.2L6.6 11.4L12.9 4.2" fill="none" stroke="#505050" stroke-width="1.4"/></svg>
<div class="b" style="left:440px;top:633.35px;width:693px;height:19.962px;background:#f0f0f0;"></div>
<div class="b" style="left:399px;top:633.35px;width:41px;height:19.962px;background:#e4ebf7;border-bottom:1px solid #a5bfe0;border-right:1px solid #a5bfe0;"></div>
<span class="t" style="left:443.30px;top:635.36px;font-size:15.7px;line-height:15.7px;color:#000;transform:scaleX(0.8609);transform-origin:left center;">P23340005</span>
<span class="t" style="right:782.70px;top:635.36px;font-size:15.7px;line-height:15.7px;color:#000;transform:scaleX(0.8609);transform-origin:right center;">5</span>
<svg class="b" style="left:891.8px;top:634.95px;" width="16" height="16" viewBox="0 0 16 16"><rect x="0.75" y="0.75" width="14.5" height="14.5" fill="#fff" stroke="#333" stroke-width="1.5"/></svg>
<svg class="b" style="left:978px;top:634.95px;" width="16" height="16" viewBox="0 0 16 16"><rect x="0.75" y="0.75" width="14.5" height="14.5" fill="#fff" stroke="#333" stroke-width="1.5"/><path d="M3.3 8.2L6.6 11.4L12.9 4.2" fill="none" stroke="#505050" stroke-width="1.4"/></svg>
<div class="b" style="left:399px;top:653.32px;width:41px;height:19.962px;background:#e4ebf7;border-bottom:1px solid #a5bfe0;border-right:1px solid #a5bfe0;"></div>
<span class="t" style="left:443.30px;top:655.33px;font-size:15.7px;line-height:15.7px;color:#000;transform:scaleX(0.8609);transform-origin:left center;">P23340006</span>
<span class="t" style="right:782.70px;top:655.33px;font-size:15.7px;line-height:15.7px;color:#000;transform:scaleX(0.8609);transform-origin:right center;">4</span>
<svg class="b" style="left:891.8px;top:654.92px;" width="16" height="16" viewBox="0 0 16 16"><rect x="0.75" y="0.75" width="14.5" height="14.5" fill="#fff" stroke="#333" stroke-width="1.5"/></svg>
<svg class="b" style="left:978px;top:654.92px;" width="16" height="16" viewBox="0 0 16 16"><rect x="0.75" y="0.75" width="14.5" height="14.5" fill="#fff" stroke="#333" stroke-width="1.5"/><path d="M3.3 8.2L6.6 11.4L12.9 4.2" fill="none" stroke="#505050" stroke-width="1.4"/></svg>
<div class="b" style="left:440px;top:673.28px;width:693px;height:19.962px;background:#f0f0f0;"></div>
<div class="b" style="left:399px;top:673.28px;width:41px;height:19.962px;background:#e4ebf7;border-bottom:1px solid #a5bfe0;border-right:1px solid #a5bfe0;"></div>
<span class="t" style="left:443.30px;top:675.29px;font-size:15.7px;line-height:15.7px;color:#000;transform:scaleX(0.8609);transform-origin:left center;">P23340007</span>
<span class="t" style="right:782.70px;top:675.29px;font-size:15.7px;line-height:15.7px;color:#000;transform:scaleX(0.8609);transform-origin:right center;">1</span>
<svg class="b" style="left:891.8px;top:674.88px;" width="16" height="16" viewBox="0 0 16 16"><rect x="0.75" y="0.75" width="14.5" height="14.5" fill="#fff" stroke="#333" stroke-width="1.5"/></svg>
<svg class="b" style="left:978px;top:674.88px;" width="16" height="16" viewBox="0 0 16 16"><rect x="0.75" y="0.75" width="14.5" height="14.5" fill="#fff" stroke="#333" stroke-width="1.5"/><path d="M3.3 8.2L6.6 11.4L12.9 4.2" fill="none" stroke="#505050" stroke-width="1.4"/></svg>
<div class="b" style="left:399px;top:693.24px;width:41px;height:19.962px;background:#e4ebf7;border-bottom:1px solid #a5bfe0;border-right:1px solid #a5bfe0;"></div>
<span class="t" style="left:443.30px;top:695.25px;font-size:15.7px;line-height:15.7px;color:#000;transform:scaleX(0.8609);transform-origin:left center;">P23340008</span>
<span class="t" style="right:782.70px;top:695.25px;font-size:15.7px;line-height:15.7px;color:#000;transform:scaleX(0.8609);transform-origin:right center;">1</span>
<svg class="b" style="left:891.8px;top:694.84px;" width="16" height="16" viewBox="0 0 16 16"><rect x="0.75" y="0.75" width="14.5" height="14.5" fill="#fff" stroke="#333" stroke-width="1.5"/></svg>
<svg class="b" style="left:978px;top:694.84px;" width="16" height="16" viewBox="0 0 16 16"><rect x="0.75" y="0.75" width="14.5" height="14.5" fill="#fff" stroke="#333" stroke-width="1.5"/><path d="M3.3 8.2L6.6 11.4L12.9 4.2" fill="none" stroke="#505050" stroke-width="1.4"/></svg>
<div class="b" style="left:440px;top:713.2px;width:693px;height:19.962px;background:#f0f0f0;"></div>
<div class="b" style="left:399px;top:713.2px;width:41px;height:19.962px;background:#e4ebf7;border-bottom:1px solid #a5bfe0;border-right:1px solid #a5bfe0;"></div>
<span class="t" style="left:443.30px;top:715.21px;font-size:15.7px;line-height:15.7px;color:#000;transform:scaleX(0.8609);transform-origin:left center;">P23340009</span>
<span class="t" style="right:782.70px;top:715.21px;font-size:15.7px;line-height:15.7px;color:#000;transform:scaleX(0.8609);transform-origin:right center;">1</span>
<svg class="b" style="left:891.8px;top:714.8px;" width="16" height="16" viewBox="0 0 16 16"><rect x="0.75" y="0.75" width="14.5" height="14.5" fill="#fff" stroke="#333" stroke-width="1.5"/></svg>
<svg class="b" style="left:978px;top:714.8px;" width="16" height="16" viewBox="0 0 16 16"><rect x="0.75" y="0.75" width="14.5" height="14.5" fill="#fff" stroke="#333" stroke-width="1.5"/><path d="M3.3 8.2L6.6 11.4L12.9 4.2" fill="none" stroke="#505050" stroke-width="1.4"/></svg>
<div class="b" style="left:399px;top:733.16px;width:41px;height:19.962px;background:#e4ebf7;border-bottom:1px solid #a5bfe0;border-right:1px solid #a5bfe0;"></div>
<span class="t" style="left:443.30px;top:735.17px;font-size:15.7px;line-height:15.7px;color:#000;transform:scaleX(0.8609);transform-origin:left center;">P23340010</span>
<span class="t" style="right:782.70px;top:735.17px;font-size:15.7px;line-height:15.7px;color:#000;transform:scaleX(0.8609);transform-origin:right center;">1</span>
<svg class="b" style="left:891.8px;top:734.76px;" width="16" height="16" viewBox="0 0 16 16"><rect x="0.75" y="0.75" width="14.5" height="14.5" fill="#fff" stroke="#333" stroke-width="1.5"/></svg>
<svg class="b" style="left:978px;top:734.76px;" width="16" height="16" viewBox="0 0 16 16"><rect x="0.75" y="0.75" width="14.5" height="14.5" fill="#fff" stroke="#333" stroke-width="1.5"/><path d="M3.3 8.2L6.6 11.4L12.9 4.2" fill="none" stroke="#505050" stroke-width="1.4"/></svg>
<div class="b" style="left:440px;top:753.13px;width:693px;height:19.962px;background:#f0f0f0;"></div>
<div class="b" style="left:399px;top:753.13px;width:41px;height:19.962px;background:#e4ebf7;border-bottom:1px solid #a5bfe0;border-right:1px solid #a5bfe0;"></div>
<span class="t" style="left:443.30px;top:755.14px;font-size:15.7px;line-height:15.7px;color:#000;transform:scaleX(0.8609);transform-origin:left center;">P23360001</span>
<span class="t" style="right:782.70px;top:755.14px;font-size:15.7px;line-height:15.7px;color:#000;transform:scaleX(0.8609);transform-origin:right center;">3</span>
<svg class="b" style="left:891.8px;top:754.73px;" width="16" height="16" viewBox="0 0 16 16"><rect x="0.75" y="0.75" width="14.5" height="14.5" fill="#fff" stroke="#333" stroke-width="1.5"/></svg>
<svg class="b" style="left:978px;top:754.73px;" width="16" height="16" viewBox="0 0 16 16"><rect x="0.75" y="0.75" width="14.5" height="14.5" fill="#fff" stroke="#333" stroke-width="1.5"/><path d="M3.3 8.2L6.6 11.4L12.9 4.2" fill="none" stroke="#505050" stroke-width="1.4"/></svg>
<div class="b" style="left:399px;top:773.09px;width:41px;height:19.962px;background:#e4ebf7;border-bottom:1px solid #a5bfe0;border-right:1px solid #a5bfe0;"></div>
<span class="t" style="left:443.30px;top:775.10px;font-size:15.7px;line-height:15.7px;color:#000;transform:scaleX(0.8609);transform-origin:left center;">P23370001</span>
<span class="t" style="right:782.70px;top:775.10px;font-size:15.7px;line-height:15.7px;color:#000;transform:scaleX(0.8609);transform-origin:right center;">4</span>
<svg class="b" style="left:891.8px;top:774.69px;" width="16" height="16" viewBox="0 0 16 16"><rect x="0.75" y="0.75" width="14.5" height="14.5" fill="#fff" stroke="#333" stroke-width="1.5"/></svg>
<svg class="b" style="left:978px;top:774.69px;" width="16" height="16" viewBox="0 0 16 16"><rect x="0.75" y="0.75" width="14.5" height="14.5" fill="#fff" stroke="#333" stroke-width="1.5"/><path d="M3.3 8.2L6.6 11.4L12.9 4.2" fill="none" stroke="#505050" stroke-width="1.4"/></svg>
<div class="b" style="left:440px;top:793.05px;width:693px;height:19.962px;background:#f0f0f0;"></div>
<div class="b" style="left:399px;top:793.05px;width:41px;height:19.962px;background:#fdd28c;border-top:1px solid #f5a850;border-bottom:1px solid #f5c070;border-right:1px solid #a5bfe0;"></div>
<span class="t" style="left:443.30px;top:795.06px;font-size:15.7px;line-height:15.7px;color:#000;transform:scaleX(0.8609);transform-origin:left center;">P23380001</span>
<span class="t" style="right:782.70px;top:795.06px;font-size:15.7px;line-height:15.7px;color:#000;transform:scaleX(0.8609);transform-origin:right center;">3</span>
<svg class="b" style="left:891.8px;top:794.65px;" width="16" height="16" viewBox="0 0 16 16"><rect x="0.75" y="0.75" width="14.5" height="14.5" fill="#fff" stroke="#333" stroke-width="1.5"/></svg>
<svg class="b" style="left:978px;top:794.65px;" width="16" height="16" viewBox="0 0 16 16"><rect x="0.75" y="0.75" width="14.5" height="14.5" fill="#fff" stroke="#333" stroke-width="1.5"/><path d="M3.3 8.2L6.6 11.4L12.9 4.2" fill="none" stroke="#505050" stroke-width="1.4"/></svg>
<div class="b" style="left:399px;top:813.01px;width:41px;height:19.962px;background:#e4ebf7;border-bottom:1px solid #a5bfe0;border-right:1px solid #a5bfe0;"></div>
<span class="t" style="left:443.30px;top:815.02px;font-size:15.7px;line-height:15.7px;color:#000;transform:scaleX(0.8609);transform-origin:left center;">P23380002</span>
<span class="t" style="right:782.70px;top:815.02px;font-size:15.7px;line-height:15.7px;color:#000;transform:scaleX(0.8609);transform-origin:right center;">4</span>
<svg class="b" style="left:891.8px;top:814.61px;" width="16" height="16" viewBox="0 0 16 16"><rect x="0.75" y="0.75" width="14.5" height="14.5" fill="#fff" stroke="#333" stroke-width="1.5"/></svg>
<svg class="b" style="left:978px;top:814.61px;" width="16" height="16" viewBox="0 0 16 16"><rect x="0.75" y="0.75" width="14.5" height="14.5" fill="#fff" stroke="#333" stroke-width="1.5"/><path d="M3.3 8.2L6.6 11.4L12.9 4.2" fill="none" stroke="#505050" stroke-width="1.4"/></svg>
<div class="b" style="left:440px;top:832.97px;width:693px;height:19.962px;background:#f0f0f0;"></div>
<div class="b" style="left:399px;top:832.97px;width:41px;height:19.962px;background:#e4ebf7;border-bottom:1px solid #a5bfe0;border-right:1px solid #a5bfe0;"></div>
<span class="t" style="left:443.30px;top:834.98px;font-size:15.7px;line-height:15.7px;color:#000;transform:scaleX(0.8609);transform-origin:left center;">P23380003</span>
<span class="t" style="right:782.70px;top:834.98px;font-size:15.7px;line-height:15.7px;color:#000;transform:scaleX(0.8609);transform-origin:right center;">4</span>
<svg class="b" style="left:891.8px;top:834.57px;" width="16" height="16" viewBox="0 0 16 16"><rect x="0.75" y="0.75" width="14.5" height="14.5" fill="#fff" stroke="#333" stroke-width="1.5"/><path d="M3.3 8.2L6.6 11.4L12.9 4.2" fill="none" stroke="#505050" stroke-width="1.4"/></svg>
<svg class="b" style="left:978px;top:834.57px;" width="16" height="16" viewBox="0 0 16 16"><rect x="0.75" y="0.75" width="14.5" height="14.5" fill="#fff" stroke="#333" stroke-width="1.5"/></svg>
<div class="b" style="left:399px;top:852.94px;width:41px;height:19.962px;background:#e4ebf7;border-bottom:1px solid #a5bfe0;border-right:1px solid #a5bfe0;"></div>
<span class="t" style="left:443.30px;top:854.95px;font-size:15.7px;line-height:15.7px;color:#000;transform:scaleX(0.8609);transform-origin:left center;">P23390001</span>
<span class="t" style="right:782.70px;top:854.95px;font-size:15.7px;line-height:15.7px;color:#000;transform:scaleX(0.8609);transform-origin:right center;">2</span>
<svg class="b" style="left:891.8px;top:854.54px;" width="16" height="16" viewBox="0 0 16 16"><rect x="0.75" y="0.75" width="14.5" height="14.5" fill="#fff" stroke="#333" stroke-width="1.5"/></svg>
<svg class="b" style="left:978px;top:854.54px;" width="16" height="16" viewBox="0 0 16 16"><rect x="0.75" y="0.75" width="14.5" height="14.5" fill="#fff" stroke="#333" stroke-width="1.5"/><path d="M3.3 8.2L6.6 11.4L12.9 4.2" fill="none" stroke="#505050" stroke-width="1.4"/></svg>
<div class="b" style="left:440px;top:872.9px;width:693px;height:19.962px;background:#f0f0f0;"></div>
<div class="b" style="left:399px;top:872.9px;width:41px;height:19.962px;background:#e4ebf7;border-bottom:1px solid #a5bfe0;border-right:1px solid #a5bfe0;"></div>
<span class="t" style="left:443.30px;top:874.91px;font-size:15.7px;line-height:15.7px;color:#000;transform:scaleX(0.8609);transform-origin:left center;">P23390002</span>
<span class="t" style="right:782.70px;top:874.91px;font-size:15.7px;line-height:15.7px;color:#000;transform:scaleX(0.8609);transform-origin:right center;">1</span>
<svg class="b" style="left:891.8px;top:874.5px;" width="16" height="16" viewBox="0 0 16 16"><rect x="0.75" y="0.75" width="14.5" height="14.5" fill="#fff" stroke="#333" stroke-width="1.5"/></svg>
<svg class="b" style="left:978px;top:874.5px;" width="16" height="16" viewBox="0 0 16 16"><rect x="0.75" y="0.75" width="14.5" height="14.5" fill="#fff" stroke="#333" stroke-width="1.5"/></svg>
<div class="b" style="left:399px;top:892.86px;width:41px;height:19.962px;background:#e4ebf7;border-bottom:1px solid #a5bfe0;border-right:1px solid #a5bfe0;"></div>
<span class="t" style="left:443.30px;top:894.87px;font-size:15.7px;line-height:15.7px;color:#000;transform:scaleX(0.8609);transform-origin:left center;">P23390003</span>
<span class="t" style="right:782.70px;top:894.87px;font-size:15.7px;line-height:15.7px;color:#000;transform:scaleX(0.8609);transform-origin:right center;">1</span>
<svg class="b" style="left:891.8px;top:894.46px;" width="16" height="16" viewBox="0 0 16 16"><rect x="0.75" y="0.75" width="14.5" height="14.5" fill="#fff" stroke="#333" stroke-width="1.5"/></svg>
<svg class="b" style="left:978px;top:894.46px;" width="16" height="16" viewBox="0 0 16 16"><rect x="0.75" y="0.75" width="14.5" height="14.5" fill="#fff" stroke="#333" stroke-width="1.5"/></svg>
<div class="b" style="left:440px;top:912.82px;width:693px;height:19.962px;background:#f0f0f0;"></div>
<div class="b" style="left:399px;top:912.82px;width:41px;height:19.962px;background:#e4ebf7;border-bottom:1px solid #a5bfe0;border-right:1px solid #a5bfe0;"></div>
<span class="t" style="left:443.30px;top:914.83px;font-size:15.7px;line-height:15.7px;color:#000;transform:scaleX(0.8609);transform-origin:left center;">T2335</span>
<span class="t" style="right:782.70px;top:914.83px;font-size:15.7px;line-height:15.7px;color:#000;transform:scaleX(0.8609);transform-origin:right center;">5</span>
<svg class="b" style="left:891.8px;top:914.42px;" width="16" height="16" viewBox="0 0 16 16"><rect x="0.75" y="0.75" width="14.5" height="14.5" fill="#fff" stroke="#333" stroke-width="1.5"/></svg>
<svg class="b" style="left:978px;top:914.42px;" width="16" height="16" viewBox="0 0 16 16"><rect x="0.75" y="0.75" width="14.5" height="14.5" fill="#fff" stroke="#333" stroke-width="1.5"/></svg>
<div class="b" style="left:440px;top:791.45px;width:262px;height:22.6px;border:3px solid #000;border-left-width:1.5px;"></div>
<div class="b" style="left:854px;top:294px;width:1px;height:639px;border-left:1px dotted #d2d2d2;"></div>
<div class="b" style="left:946px;top:294px;width:1px;height:639px;border-left:1px dotted #d2d2d2;"></div>
<div class="b" style="left:1027px;top:294px;width:1px;height:639px;border-left:1px dotted #d2d2d2;"></div>
<div class="b" style="left:1128px;top:294px;width:1px;height:639px;border-left:1px dotted #d2d2d2;"></div>
<div class="b" style="left:399px;top:933px;width:734px;height:1px;background:#c0c0c0;"></div>
<div class="b" style="left:1133px;top:255px;width:20px;height:683px;background:#7398c3;"></div>
<div class="b" style="left:1134px;top:255px;width:19px;height:19px;background:linear-gradient(#dce8fa,#b9cff0);border:1px solid #8eaedb;"></div>
<svg class="b" style="left:1137.5px;top:261px;" width="12" height="7" viewBox="0 0 12 7"><path d="M6 0.4L11.6 6.6H0.4Z" fill="#3b4a68"/></svg>
<div class="b" style="left:1134px;top:838px;width:19px;height:82px;background:linear-gradient(90deg,#cfdff7 0%,#c2d6f4 45%,#b2caee 50%,#bcd1f1 100%);border:1px solid #8eaedb;"></div>
<div class="b" style="left:1134px;top:920px;width:19px;height:18px;background:linear-gradient(#dce8fa,#b9cff0);border:1px solid #8eaedb;"></div>
<svg class="b" style="left:1137.5px;top:926px;" width="12" height="7" viewBox="0 0 12 7"><path d="M6 6.6L11.6 0.4H0.4Z" fill="#3b4a68"/></svg>
<div class="b" style="left:399px;top:938.5px;width:754px;height:19.5px;background:#7398c3;"></div>
<div class="b" style="left:1133px;top:938.5px;width:20px;height:19.5px;background:linear-gradient(#7398c3,#9fb9dc);"></div>
<div class="b" style="left:399px;top:939px;width:19px;height:19px;background:linear-gradient(#dce8fa,#b9cff0);border:1px solid #8eaedb;"></div>
<svg class="b" style="left:405px;top:942.5px;" width="7" height="12" viewBox="0 0 7 12"><path d="M0.4 6L6.6 0.4V11.6Z" fill="#3b4a68"/></svg>
<div class="b" style="left:418px;top:939px;width:484.5px;height:19px;background:linear-gradient(#d8e5f9 0%,#cbdcf6 45%,#b6cdef 50%,#bed3f2 100%);border:1px solid #8eaedb;"></div>
<div class="b" style="left:1113.5px;top:939px;width:19px;height:19px;background:linear-gradient(#dce8fa,#b9cff0);border:1px solid #8eaedb;"></div>
<svg class="b" style="left:1120px;top:942.5px;" width="7" height="12" viewBox="0 0 7 12"><path d="M6.6 6L0.4 0.4V11.6Z" fill="#3b4a68"/></svg>
<div class="b" style="left:402px;top:969px;width:82px;height:24px;background:#e1e1e1;border:1px solid #adadad;"></div>
<svg class="b" style="left:413px;top:974.5px;" width="16" height="14" viewBox="0 0 16 14"><path d="M2 1.6L14 12.4M14 1.6L2 12.4" stroke="#e9531d" stroke-width="3.2" stroke-linecap="round"/></svg>
<span class="t" style="left:434.60px;top:972.71px;font-size:15.7px;line-height:15.7px;color:#000;transform:scaleX(0.7992);transform-origin:left center;">Fermer</span>
</main>
<aside aria-label="Détail série">
<div class="b" style="left:1155px;top:248px;width:754px;height:34px;background:linear-gradient(180deg,rgba(255,255,255,0) 0%,rgba(253,253,253,0.9) 100%),linear-gradient(90deg,#fbfbfb 0%,#f3f3f3 40%,#ececec 100%);"></div>
<div class="b" style="left:1162px;top:281.5px;width:760px;height:678px;background:#f0f0f0;border:1px solid #9a9a9a;"></div>
<div class="b" style="left:1163px;top:283px;width:746px;height:2px;background:linear-gradient(#d8d8d8,#f0f0f0);"></div>
<svg class="b" style="left:1160px;top:250px;" width="240" height="36" viewBox="1160 250 240 36"><path d="M1169.5 282.5 C1176 276 1178 259.5 1188 258.5 H1278 C1289 259.5 1291 276 1299 282.5" fill="#f4f4f4" stroke="#8f8f8f" stroke-width="1"/><path d="M1291 272 C1293 262 1297 258.5 1302 258.5 H1368 C1379 259.5 1381 276 1390 282.5 H1299" fill="#efefef" stroke="#8f8f8f" stroke-width="1"/><path d="M1170.5 282.5H1298.5" stroke="#f2f2f2" stroke-width="1.6"/></svg>
<svg class="b" style="left:1184px;top:260px;" width="15" height="19" viewBox="0 0 15 19"><path d="M5.5 0.8H11.2L14.2 3.8V13.5H5.5Z" fill="#efe9dc" stroke="#c2bcad" stroke-width="0.7"/><path d="M11.2 0.8V3.8H14.2Z" fill="#8d8778"/><path d="M0.8 5H6.8L9.6 7.8V18.2H0.8Z" fill="#f8f4ea" stroke="#c2bcad" stroke-width="0.7"/><path d="M6.8 5V7.8H9.6Z" fill="#8d8778"/></svg>
<span class="t" style="left:1205.00px;top:261.76px;font-size:15.4px;line-height:15.4px;color:#000;font-weight:700;transform:scaleX(0.9566);transform-origin:left center;">Généralités</span>
<span class="t" style="left:1297.40px;top:261.76px;font-size:15.4px;line-height:15.4px;color:#000;transform:scaleX(0.8827);transform-origin:left center;">Qui, quand ?</span>
<div class="b" style="left:1168px;top:285px;width:741px;height:648px;background:#fff;"></div>
<div class="b" style="left:1169px;top:287.5px;width:688px;height:31px;background:#00a7b5;"></div>
<span class="t" style="left:1209.30px;top:298.20px;font-size:15px;line-height:15px;color:#fff;font-weight:700;transform:scaleX(0.928);transform-origin:left center;">GENERALITES</span>
<div class="b" style="left:1169px;top:426.3px;width:688px;height:31px;background:#00a7b5;"></div>
<span class="t" style="left:1209.30px;top:437.00px;font-size:15px;line-height:15px;color:#fff;font-weight:700;transform:scaleX(0.94);transform-origin:left center;">PLANIFICATION ET SUIVI</span>
<div class="b" style="left:1169px;top:589.2px;width:688px;height:31px;background:#00a7b5;"></div>
<span class="t" style="left:1209.30px;top:599.90px;font-size:15px;line-height:15px;color:#fff;font-weight:700;transform:scaleX(0.9555);transform-origin:left center;">STATUT</span>
<div class="b" style="left:1169px;top:701.4px;width:688px;height:31px;background:#00a7b5;"></div>
<span class="t" style="left:1209.30px;top:712.10px;font-size:15px;line-height:15px;color:#fff;font-weight:700;transform:scaleX(0.9674);transform-origin:left center;">SUIVI</span>
<div class="b" style="left:1305.2px;top:326.3px;width:250px;height:25px;background:#eaeffa;"></div><span class="t" style="right:612.70px;top:329.76px;font-size:15.4px;line-height:15.4px;color:#000;transform:scaleX(0.8628);transform-origin:right center;">Série</span><span class="t" style="left:1308.80px;top:330.66px;font-size:15.4px;line-height:15.4px;color:#000;font-weight:700;letter-spacing:0.095px;">P23380001</span>
<div class="b" style="left:1305.2px;top:357.5px;width:250px;height:25px;background:#eaeffa;"></div><span class="t" style="right:612.70px;top:360.96px;font-size:15.4px;line-height:15.4px;color:#000;transform:scaleX(0.8474);transform-origin:right center;">Libellé série</span><span class="t" style="left:1308.80px;top:361.86px;font-size:15.4px;line-height:15.4px;color:#000;font-weight:700;letter-spacing:0.097px;">Atelier U1 2023S38</span>
<div class="b" style="left:1305.2px;top:388.8px;width:250px;height:25px;background:#eaeffa;"></div><span class="t" style="right:612.70px;top:392.26px;font-size:15.4px;line-height:15.4px;color:#000;transform:scaleX(0.856);transform-origin:right center;">Gestionnaire</span><span class="t" style="left:1308.80px;top:393.16px;font-size:15.4px;line-height:15.4px;color:#000;font-weight:700;">U1</span>
<div class="b" style="left:1559.3px;top:390px;width:17.6px;height:17.5px;background:#fff;border:2px solid #c9c9c9;"></div><span class="t" style="left:1563.70px;top:391.73px;font-size:14.5px;line-height:14.5px;color:#000;font-weight:700;">?</span>
<span class="t" style="left:1584.30px;top:392.06px;font-size:15.4px;line-height:15.4px;color:#000;transform:scaleX(0.8714);transform-origin:left center;">Site de production 1</span>
<span class="t" style="right:200.00px;top:360.86px;font-size:15.4px;line-height:15.4px;color:#000;transform:scaleX(0.8841);transform-origin:right center;">Unité Production</span>
<div class="b" style="left:1718px;top:357.5px;width:113px;height:21.5px;background:#eaeffa;"></div>
<span class="t" style="left:1722.30px;top:360.86px;font-size:15.4px;line-height:15.4px;color:#000;font-weight:700;">U1</span>
<div class="b" style="left:1834.3px;top:359.3px;width:17.6px;height:17.5px;background:#fff;border:2px solid #c9c9c9;"></div><span class="t" style="left:1838.70px;top:361.03px;font-size:14.5px;line-height:14.5px;color:#000;font-weight:700;">?</span>
<div class="b" style="left:1305.2px;top:463.7px;width:250px;height:25px;background:#eaeffa;"></div><span class="t" style="right:612.70px;top:467.16px;font-size:15.4px;line-height:15.4px;color:#000;transform:scaleX(0.886);transform-origin:right center;">Date prévue début</span><span class="t" style="left:1308.80px;top:468.06px;font-size:15.4px;line-height:15.4px;color:#000;font-weight:700;letter-spacing:1.052px;">12/09/2023</span>
<div class="b" style="left:1559.3px;top:465.7px;width:17.6px;height:17.5px;background:#fff;border:2px solid #c9c9c9;"></div><span class="t" style="left:1563.70px;top:467.43px;font-size:14.5px;line-height:14.5px;color:#000;font-weight:700;">?</span>
<div class="b" style="left:1305.2px;top:495px;width:250px;height:25px;background:#eaeffa;"></div><span class="t" style="right:612.70px;top:498.46px;font-size:15.4px;line-height:15.4px;color:#000;transform:scaleX(0.8834);transform-origin:right center;">Date prévue fin</span><span class="t" style="left:1308.80px;top:499.36px;font-size:15.4px;line-height:15.4px;color:#000;font-weight:700;letter-spacing:1.052px;">21/09/2023</span>
<div class="b" style="left:1559.3px;top:497px;width:17.6px;height:17.5px;background:#fff;border:2px solid #c9c9c9;"></div><span class="t" style="left:1563.70px;top:498.73px;font-size:14.5px;line-height:14.5px;color:#000;font-weight:700;">?</span>
<div class="b" style="left:1305.2px;top:526.3px;width:250px;height:25px;background:#eaeffa;"></div><span class="t" style="right:612.70px;top:529.76px;font-size:15.4px;line-height:15.4px;color:#000;transform:scaleX(0.8753);transform-origin:right center;">Date réelle debut</span><span class="t" style="left:1308.80px;top:530.66px;font-size:15.4px;line-height:15.4px;color:#000;font-weight:700;letter-spacing:1.052px;">16/08/2023</span>
<div class="b" style="left:1559.3px;top:528.3px;width:17.6px;height:17.5px;background:#fff;border:2px solid #c9c9c9;"></div><span class="t" style="left:1563.70px;top:530.03px;font-size:14.5px;line-height:14.5px;color:#000;font-weight:700;">?</span>
<div class="b" style="left:1305.2px;top:557.7px;width:250px;height:25px;background:#eaeffa;"></div><span class="t" style="right:612.70px;top:561.16px;font-size:15.4px;line-height:15.4px;color:#000;transform:scaleX(0.8667);transform-origin:right center;">Date réelle fin</span><span class="t" style="left:1308.80px;top:562.06px;font-size:15.4px;line-height:15.4px;color:#000;font-weight:700;letter-spacing:1.052px;">16/08/2023</span>
<div class="b" style="left:1559.3px;top:559.7px;width:17.6px;height:17.5px;background:#fff;border:2px solid #c9c9c9;"></div><span class="t" style="left:1563.70px;top:561.43px;font-size:14.5px;line-height:14.5px;color:#000;font-weight:700;">?</span>
<div class="b" style="left:1305.5px;top:626.5px;width:12.5px;height:21px;background:#eaeffa;"></div>
<span class="t" style="right:609.40px;top:628.46px;font-size:15.4px;line-height:15.4px;color:#000;transform:scaleX(0.8444);transform-origin:right center;">Fabriqué partiellement</span>
<svg class="b" style="left:1305.5px;top:630px;" width="13" height="13" viewBox="0 0 13 13"><rect x="0.5" y="0.5" width="11.5" height="11.5" fill="#fff" stroke="#c6c6c6" stroke-width="1"/></svg>
<div class="b" style="left:1305.5px;top:651.5px;width:12.5px;height:21px;background:#eaeffa;"></div>
<span class="t" style="right:612.70px;top:653.46px;font-size:15.4px;line-height:15.4px;color:#000;transform:scaleX(0.8686);transform-origin:right center;">Fabriquée</span>
<svg class="b" style="left:1305.5px;top:655px;" width="13" height="13" viewBox="0 0 13 13"><rect x="0.5" y="0.5" width="11.5" height="11.5" fill="#fff" stroke="#c6c6c6" stroke-width="1"/><path d="M2.6 6.2L5 8.6L9.4 3.4" fill="none" stroke="#b0b0b0" stroke-width="1.2"/></svg>
<div class="b" style="left:1305.5px;top:676.5px;width:12.5px;height:21px;background:#eaeffa;"></div>
<span class="t" style="right:612.70px;top:678.46px;font-size:15.4px;line-height:15.4px;color:#000;transform:scaleX(0.8697);transform-origin:right center;">Lancement atelier</span>
<svg class="b" style="left:1305.5px;top:680px;" width="13" height="13" viewBox="0 0 13 13"><rect x="0.5" y="0.5" width="11.5" height="11.5" fill="#fff" stroke="#c6c6c6" stroke-width="1"/></svg>
<div class="b" style="left:1305.2px;top:739px;width:125px;height:25px;background:#eaeffa;"></div><span class="t" style="right:612.70px;top:742.46px;font-size:15.4px;line-height:15.4px;color:#000;transform:scaleX(0.8803);transform-origin:right center;">Quantité lancée</span><span class="t" style="left:1334.60px;top:743.36px;font-size:15.4px;line-height:15.4px;color:#000;font-weight:700;letter-spacing:0.748px;">3,00</span>
<div class="b" style="left:1305.2px;top:770px;width:125px;height:25px;background:#eaeffa;"></div><span class="t" style="right:612.70px;top:773.46px;font-size:15.4px;line-height:15.4px;color:#000;transform:scaleX(0.8694);transform-origin:right center;">Quantité fabriquée</span><span class="t" style="left:1334.60px;top:774.36px;font-size:15.4px;line-height:15.4px;color:#000;font-weight:700;letter-spacing:0.748px;">3,00</span>
<div class="b" style="left:1305.2px;top:801.2px;width:125px;height:25px;background:#eaeffa;"></div><span class="t" style="right:612.70px;top:804.66px;font-size:15.4px;line-height:15.4px;color:#000;transform:scaleX(0.8698);transform-origin:right center;">Quantité restante</span><span class="t" style="left:1334.60px;top:805.56px;font-size:15.4px;line-height:15.4px;color:#000;font-weight:700;letter-spacing:0.748px;">0,00</span>
<div class="b" style="left:1168px;top:933px;width:741px;height:18px;background:#f0f0f0;"></div>
<div class="b" style="left:1189px;top:933px;width:646.5px;height:18px;background:#cdcdcd;"></div>
<svg class="b" style="left:1174px;top:937px;" width="9" height="10" viewBox="0 0 9 10"><path d="M7.5 1L2 5L7.5 9" fill="none" stroke="#404040" stroke-width="2"/></svg>
<svg class="b" style="left:1895px;top:937px;" width="9" height="10" viewBox="0 0 9 10"><path d="M1.5 1L7 5L1.5 9" fill="none" stroke="#404040" stroke-width="2"/></svg>
<div class="b" style="left:1165.5px;top:969px;width:100px;height:24.5px;background:#cccccc;border:1px solid #bfbfbf;"></div>
<span class="t" style="left:1197.30px;top:973.16px;font-size:15.4px;line-height:15.4px;color:#838383;transform:scaleX(0.8999);transform-origin:left center;">Validation</span>
<svg class="b" style="left:1177.5px;top:975px;" width="13" height="12" viewBox="0 0 13 12"><path d="M1.2 6.4L4.8 10L11.8 2" fill="none" stroke="#dcdcdc" stroke-width="2.4"/></svg>
<div class="b" style="left:1270.5px;top:969px;width:100px;height:24.5px;background:#cccccc;border:1px solid #bfbfbf;"></div>
<span class="t" style="left:1284.40px;top:973.16px;font-size:15.4px;line-height:15.4px;color:#838383;transform:scaleX(0.8855);transform-origin:left center;">Sauvegarde</span>
<div class="b" style="left:1375.5px;top:969px;width:100px;height:24.5px;background:#cccccc;border:1px solid #bfbfbf;"></div>
<span class="t" style="left:1410.00px;top:973.16px;font-size:15.4px;line-height:15.4px;color:#838383;transform:scaleX(0.9039);transform-origin:left center;">Abandon</span>
<svg class="b" style="left:1389.5px;top:974.5px;" width="14" height="14" viewBox="0 0 14 14"><path d="M1.6 1.6L12.4 12.4M12.4 1.6L1.6 12.4" stroke="#b4b4b4" stroke-width="3" stroke-linecap="round"/></svg>
</aside>
<menu aria-label="Menu contextuel">
<div class="b" style="left:521px;top:38px;width:316px;height:970px;background:#f2f2f2;border:1px solid #cdcdcd;box-shadow:2.5px 3px 4px rgba(0,0,0,0.5), 1px 0 0.5px rgba(0,0,0,0.35);"></div>
<span class="t" style="left:564.80px;top:47.23px;font-size:15px;line-height:15px;color:#000;letter-spacing:-0.234px;">Gestion Lignes (Maj+F3)</span>
<div class="b" style="left:560px;top:73.225px;width:273px;height:1px;background:#d7d7d7;"></div>
<span class="t" style="left:564.80px;top:83.63px;font-size:15px;line-height:15px;color:#000;letter-spacing:-0.297px;">Création (F9)</span>
<div class="b" style="left:523.5px;top:106.15px;width:310.5px;height:27.25px;background:#9195f3;border-bottom:1.6px solid #8ec6f4;"></div>
<span class="t" style="left:564.80px;top:111.08px;font-size:15px;line-height:15px;color:#000;letter-spacing:0.081px;">Modification (F1)</span>
<span class="t" style="left:564.80px;top:138.53px;font-size:15px;line-height:15px;color:#8b8b8b;letter-spacing:-0.437px;">Suppression (F6)</span>
<span class="t" style="left:564.80px;top:165.98px;font-size:15px;line-height:15px;color:#000;letter-spacing:-0.411px;">Détail (F8)</span>
<span class="t" style="left:564.80px;top:193.43px;font-size:15px;line-height:15px;color:#000;letter-spacing:-0.035px;">Consultation Inf. Techniques</span>
<span class="t" style="left:564.80px;top:220.88px;font-size:15px;line-height:15px;color:#8b8b8b;letter-spacing:-0.189px;">Historique (F10)</span>
<span class="t" style="left:564.80px;top:248.33px;font-size:15px;line-height:15px;color:#8b8b8b;letter-spacing:-0.338px;">Eléments Récents (Maj+F8)</span>
<span class="t" style="left:564.80px;top:275.78px;font-size:15px;line-height:15px;color:#000;letter-spacing:-0.112px;">Historique Messages / Entité</span>
<span class="t" style="left:564.80px;top:303.23px;font-size:15px;line-height:15px;color:#8b8b8b;letter-spacing:-0.336px;">Envoyer un message</span>
<div class="b" style="left:560px;top:329.22499999999997px;width:273px;height:1px;background:#d7d7d7;"></div>
<span class="t" style="left:564.80px;top:339.63px;font-size:15px;line-height:15px;color:#000;letter-spacing:-0.294px;">Nouvelle Tâche</span>
<span class="t" style="left:564.80px;top:367.08px;font-size:15px;line-height:15px;color:#8b8b8b;letter-spacing:-0.357px;">Tâches de l'Entité</span>
<div class="b" style="left:560px;top:393.07499999999993px;width:273px;height:1px;background:#d7d7d7;"></div>
<span class="t" style="left:564.80px;top:403.48px;font-size:15px;line-height:15px;color:#000;letter-spacing:0.056px;">Joindre un document</span>
<span class="t" style="left:564.80px;top:430.93px;font-size:15px;line-height:15px;color:#000;letter-spacing:-0.436px;">Documents GED</span>
<div class="b" style="left:560px;top:456.9249999999999px;width:273px;height:1px;background:#d7d7d7;"></div>
<span class="t" style="left:564.80px;top:467.33px;font-size:15px;line-height:15px;color:#000;letter-spacing:-0.626px;">Accès à</span>
<svg class="b" style="left:815.5px;top:470.3249999999999px;" width="7" height="11" viewBox="0 0 7 11"><path d="M1 0.8L5.8 5.5L1 10.2" fill="none" stroke="#3a3a3a" stroke-width="1.3"/></svg>
<div class="b" style="left:560px;top:493.3249999999999px;width:273px;height:1px;background:#d7d7d7;"></div>
<span class="t" style="left:564.80px;top:503.73px;font-size:15px;line-height:15px;color:#000;letter-spacing:-0.044px;">Lancement Atelier</span>
<svg class="b" style="left:815.5px;top:506.72499999999985px;" width="7" height="11" viewBox="0 0 7 11"><path d="M1 0.8L5.8 5.5L1 10.2" fill="none" stroke="#3a3a3a" stroke-width="1.3"/></svg>
<div class="b" style="left:560px;top:529.7249999999998px;width:273px;height:1px;background:#d7d7d7;"></div>
<span class="t" style="left:564.80px;top:540.13px;font-size:15px;line-height:15px;color:#000;letter-spacing:-0.12px;">Déclaration de Fabrication</span>
<svg class="b" style="left:815.5px;top:543.1249999999999px;" width="7" height="11" viewBox="0 0 7 11"><path d="M1 0.8L5.8 5.5L1 10.2" fill="none" stroke="#3a3a3a" stroke-width="1.3"/></svg>
<span class="t" style="left:564.80px;top:567.58px;font-size:15px;line-height:15px;color:#000;letter-spacing:-0.229px;">His. Déclarations / Série</span>
<div class="b" style="left:560px;top:593.5749999999999px;width:273px;height:1px;background:#d7d7d7;"></div>
<span class="t" style="left:564.80px;top:603.98px;font-size:15px;line-height:15px;color:#000;letter-spacing:-0.072px;">Informations Suivies</span>
<div class="b" style="left:560px;top:629.975px;width:273px;height:1px;background:#d7d7d7;"></div>
<span class="t" style="left:564.80px;top:640.38px;font-size:15px;line-height:15px;color:#000;letter-spacing:-0.029px;">Déclaration Co-Produits</span>
<div class="b" style="left:560px;top:666.3750000000001px;width:273px;height:1px;background:#d7d7d7;"></div>
<span class="t" style="left:564.80px;top:676.78px;font-size:15px;line-height:15px;color:#000;letter-spacing:-0.258px;">Composants Rattachés</span>
<span class="t" style="left:564.80px;top:704.23px;font-size:15px;line-height:15px;color:#000;letter-spacing:-0.048px;">Visualisation File d'Attente</span>
<span class="t" style="left:564.80px;top:731.68px;font-size:15px;line-height:15px;color:#000;letter-spacing:-0.081px;">Caract. File d'Attente</span>
<div class="b" style="left:560px;top:757.6750000000003px;width:273px;height:1px;background:#d7d7d7;"></div>
<span class="t" style="left:564.80px;top:768.08px;font-size:15px;line-height:15px;color:#000;letter-spacing:-0.397px;">Solde Série (Maj+F6)</span>
<span class="t" style="left:564.80px;top:795.53px;font-size:15px;line-height:15px;color:#000;letter-spacing:-0.48px;">Déblocage Séries</span>
<span class="t" style="left:564.80px;top:822.98px;font-size:15px;line-height:15px;color:#000;letter-spacing:-0.35px;">Re-génération Séries</span>
<div class="b" style="left:560px;top:848.9750000000005px;width:273px;height:1px;background:#d7d7d7;"></div>
<span class="t" style="left:564.80px;top:859.38px;font-size:15px;line-height:15px;color:#000;letter-spacing:-0.203px;">Ma Présentation de Démarrage</span>
<span class="t" style="left:564.80px;top:886.83px;font-size:15px;line-height:15px;color:#000;letter-spacing:-0.176px;">Actualiser la Présentation</span>
<span class="t" style="left:564.80px;top:914.28px;font-size:15px;line-height:15px;color:#000;letter-spacing:-0.227px;">Présentations</span>
<svg class="b" style="left:815.5px;top:917.2750000000007px;" width="7" height="11" viewBox="0 0 7 11"><path d="M1 0.8L5.8 5.5L1 10.2" fill="none" stroke="#3a3a3a" stroke-width="1.3"/></svg>
<div class="b" style="left:560px;top:940.2750000000007px;width:273px;height:1px;background:#d7d7d7;"></div>
<span class="t" style="left:564.80px;top:950.68px;font-size:15px;line-height:15px;color:#000;letter-spacing:-0.169px;">Définition Filtres et Tris</span>
<span class="t" style="left:564.80px;top:978.13px;font-size:15px;line-height:15px;color:#000;letter-spacing:-0.383px;">Sélections Filtres et Tris</span>
<svg class="b" style="left:815.5px;top:981.1250000000008px;" width="7" height="11" viewBox="0 0 7 11"><path d="M1 0.8L5.8 5.5L1 10.2" fill="none" stroke="#3a3a3a" stroke-width="1.3"/></svg>
<svg class="b" style="left:654.2px;top:125.4px;" width="20" height="32" viewBox="0 0 20 32"><path d="M1.6 2.2V25.2L7 20.2L11 29.6L14.6 28L10.6 18.8H17.6Z" fill="#fff" stroke="#000" stroke-width="2" stroke-linejoin="miter"/></svg>
</menu>
</body></html>
